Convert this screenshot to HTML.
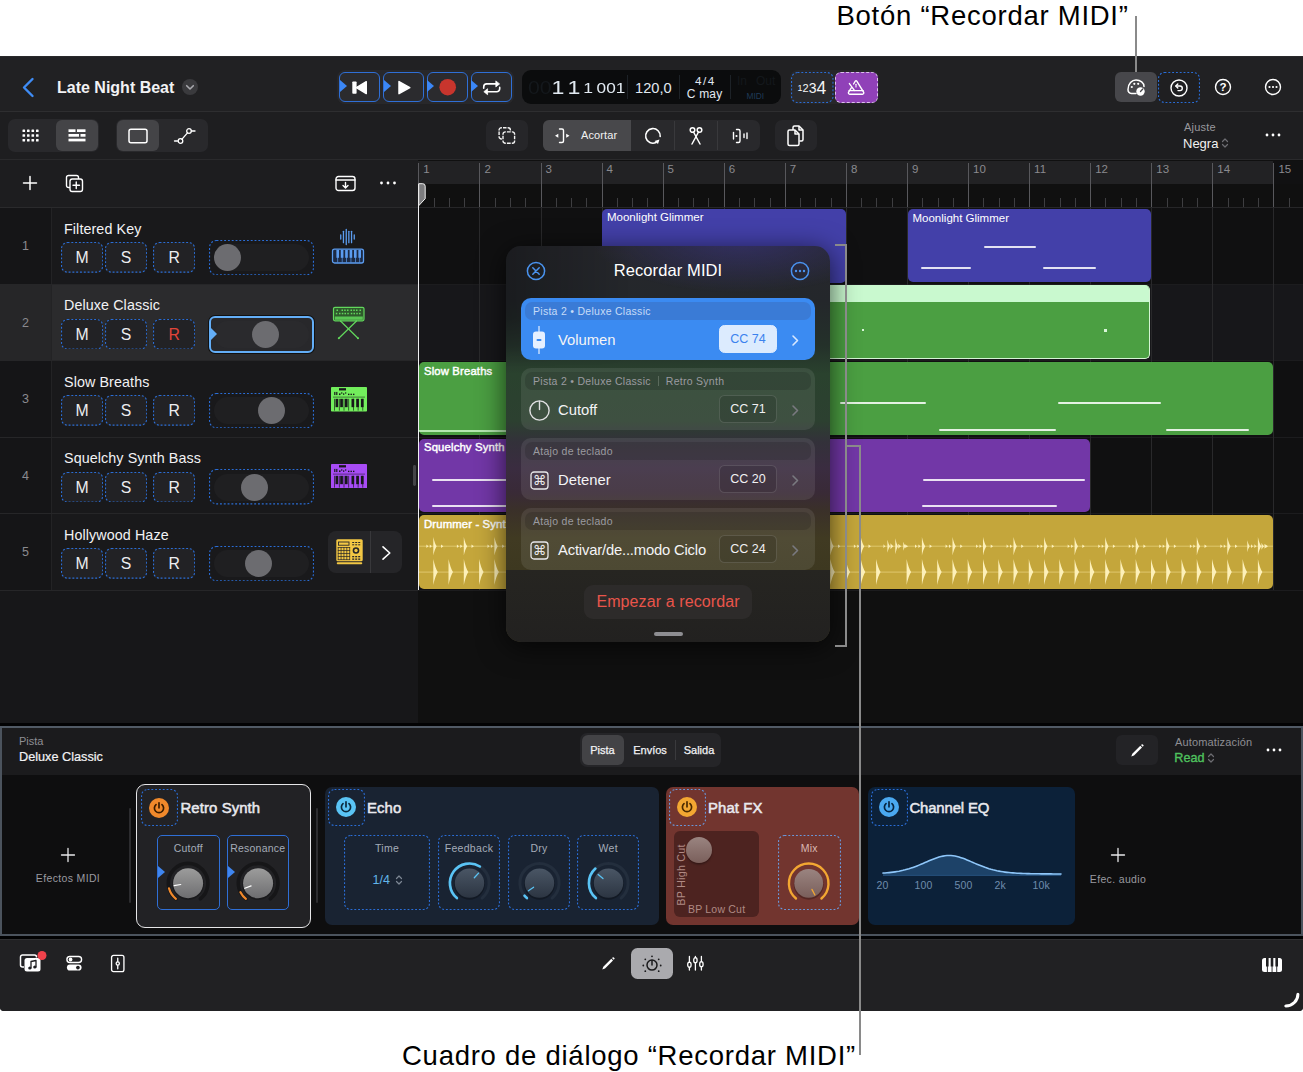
<!DOCTYPE html>
<html lang="es"><head><meta charset="utf-8"><title>Recordar MIDI</title>
<style>
*{box-sizing:border-box;margin:0;padding:0}
html,body{width:1303px;height:1072px;overflow:hidden;background:#fff}
body{font-family:"Liberation Sans",sans-serif;color:#fff;position:relative}
.abs{position:absolute}
#app{position:absolute;left:0;top:56px;width:1303px;height:954.700px;background:#1d1d1f;overflow:hidden;border-radius:0 0 4px 4px}
.callout{position:absolute;color:#000;font-size:27.500px;white-space:nowrap;letter-spacing:0.740px}
.vline{position:absolute;background:#8a8a8a;width:2px}
.hline{position:absolute;background:#8a8a8a;height:2px}
/* top bar */
#topbar{position:absolute;left:0;top:0;width:1303px;height:56px;background:#212123;border-bottom:1px solid #2e2e30;box-shadow:inset 0 1px 0 #29292b}
#toolbar2{position:absolute;left:0;top:56px;width:1303px;height:48px;background:#1e1e20;border-bottom:1px solid #2a2a2c}
#trkhead{position:absolute;left:0;top:104px;width:418px;height:48px;background:#1d1d1f;border-bottom:1px solid #2a2a2c}
#tracks{position:absolute;left:0;top:152px;width:418px;height:517px;background:#171719}
#timeline{position:absolute;left:418px;top:104px;width:885px;height:565px;background:#101010;overflow:hidden}
#panel{position:absolute;left:0;top:669px;width:1303px;height:210.650px;background:#0e0e0f}
#bottombar{position:absolute;left:0;top:882.900px;width:1303px;height:71.800px;background:#212123;border-top:1px solid #303032}

/* transport */
.tbtn{position:absolute;top:15.800px;width:41.400px;height:30.400px;border:1px solid #2f6fd6;border-radius:6px;background:#2b2b2e}
.tbtn:before{content:"";position:absolute;left:-0.500px;top:7.700px;border-left:7.300px solid #3b87f7;border-top:6.800px solid transparent;border-bottom:6.800px solid transparent}
.tbtn svg{position:absolute;left:-1px;top:-1px}
#lcd{position:absolute;left:522px;top:14px;width:259px;height:34px;border-radius:9px;background:#0b0c0d}
#lcd span{position:absolute;white-space:nowrap}
#lcd span.c{width:20px;text-align:center;color:#e1e9f1}
.ldiv{position:absolute;top:5px;width:1px;height:24px;background:#1d2227}
.dotbtn{position:absolute;border:1px solid transparent;border-radius:6px;background:#242427}
.icn{position:absolute}
.seg{position:absolute;background:#29292c;border-radius:7px}
.segsel{position:absolute;background:#444447;border-radius:6px}

.trow{position:absolute;left:0;width:418px;height:76.500px;border-bottom:1px solid #262628;background:#19191b}
.trow.sel{background:#2b2b2d}
.trow .num{position:absolute;left:0;top:0;width:52px;height:100%;border-right:1px solid #232325;color:#8a8a8f;font-size:12.500px;text-align:center;line-height:77px;background:#151517}
.trow.sel .num{background:#262628}
.trow .nm{position:absolute;left:64px;top:12.500px;font-size:14.300px;color:#f2f2f4;white-space:nowrap;letter-spacing:0.1px}
.msr{position:absolute;top:34.100px;height:30.700px;width:42.200px;border-radius:6px;background:#222225;color:#ededf0;font-size:15.800px;text-align:center;line-height:32.200px}
.sld{position:absolute;left:209px;top:31.800px;width:105px;height:35.400px;border-radius:7px}
.sld i{position:absolute;left:4.700px;top:4.600px;right:5.100px;bottom:4.200px;border-radius:14px;background:#1f1f21}
.sld b{position:absolute;top:4.300px;width:27px;height:27px;border-radius:14px;background:#6c6c70}

#ruler{position:absolute;left:0;top:1px;width:885px;height:22.700px;background:#222224}
#ruler span{position:absolute;top:2px;font-size:12px;color:#8e8e93}
.bar{position:absolute;top:3px;width:1px;background:#58585c}
.gl{position:absolute;top:47px;width:1px;height:383px;background:#29292b}
.tk{position:absolute;top:38px;width:1px;height:9px;background:#3e3e41}
.lane{position:absolute;left:0;width:885px}
.rg{position:absolute;border-radius:5px;overflow:hidden}
.rg .t{position:absolute;left:5px;top:2.500px;font-size:11.500px;color:#fff;white-space:nowrap}
.nt{position:absolute;height:2px;background:rgba(255,255,255,0.85);border-radius:1px}

#dlg{position:absolute;left:506px;top:190px;width:324px;height:396px;border-radius:15px;overflow:hidden;box-shadow:0 5px 28px rgba(0,0,0,0.68);
background:linear-gradient(180deg,#26272c 0px,#24272b 55px,#24312a 100px,#2a422e 128px,#2c4030 175px,#33313a 196px,#3a2c40 222px,#392a37 246px,#3a3029 264px,#403a22 292px,#3d3820 324px)}
.it{position:absolute;left:15px;width:294px;height:62px;border-radius:10px;background:rgba(255,255,255,0.085)}
.it .h{position:absolute;left:4px;top:4px;right:4px;height:18px;border-radius:7px;background:rgba(0,0,0,0.14);font-size:10.500px;line-height:18px;padding-left:8px;color:#9b9ba0;white-space:nowrap;letter-spacing:0.280px}
.it .l{position:absolute;left:37px;top:33px;font-size:14.800px;color:#f4f4f6;white-space:nowrap;line-height:18px}
.it .cc{position:absolute;left:198px;top:27.600px;width:58px;height:28.400px;border-radius:5.500px;border:1px solid rgba(255,255,255,0.13);font-size:12.500px;line-height:26.600px;text-align:center;color:#f0f0f2;background:rgba(0,0,0,0.12)}
.it svg.ch{position:absolute;left:269px;top:36px}
.it.sel{background:#3b8bf2}
.it.sel .h{background:#3a7bd6;color:#c6dcf8}
.it.sel .cc{background:#dcebfe;border-color:#dcebfe;color:#3b82ee}
.rg .t b{font-size:11.300px;font-weight:normal;-webkit-text-stroke:0.450px #fff;letter-spacing:0.150px}

#panel{border:2px solid #4b535d;border-top-color:#050506;border-bottom-width:2.450px}
#phead{position:absolute;left:0;top:0;width:1299px;height:47.700px;background:#1b1b1d}
.pcard{position:absolute;border-radius:7px}
.pw{position:absolute;width:37px;height:37px;border:1px solid transparent;border-radius:6px}
.pw svg.ps{position:absolute;left:6.300px;top:6.800px}
.ptitle{position:absolute;top:13.200px;font-size:14.900px;font-weight:normal;-webkit-text-stroke:0.500px #e9e9ee;color:#e9e9ee;white-space:nowrap;letter-spacing:0.100px}
.pbox{position:absolute;top:48px;height:75px;letter-spacing:0.300px;border:1px solid transparent;border-radius:5px;color:#a4acb8;font-size:10.500px;text-align:center;padding-top:6px;white-space:nowrap}
.pbox svg{position:absolute;left:0;top:0}
.pbox svg.db{left:-1px;top:-1px}
.small{font-size:10.500px;color:#9a9aa0;white-space:nowrap;position:absolute}
.db{position:absolute;left:0;top:0;pointer-events:none}
</style></head><body>
<div class="callout" style="left:836.500px;top:0px">Botón “Recordar MIDI”</div>
<div class="callout" style="left:402px;top:1040px">Cuadro de diálogo “Recordar MIDI”</div>
<div id="app">
<div id="topbar">
<svg class="icn" style="left:20px;top:20px" width="16" height="22" viewBox="0 0 16 22"><path d="M12.500 3 L4 11.500 L12.500 20" fill="none" stroke="#3f8cf5" stroke-width="2.4" stroke-linecap="round" stroke-linejoin="round"/></svg>
<div class="abs" style="left:57px;top:22.500px;font-size:16px;font-weight:bold;letter-spacing:0px;color:#f2f2f4;white-space:nowrap">Late Night Beat</div>
<div class="abs" style="left:182px;top:23px;width:16px;height:16px;border-radius:8px;background:#3a3a3d"></div>
<svg class="icn" style="left:182px;top:23px" width="16" height="16" viewBox="0 0 16 16"><path d="M4.7 6.7 L8 10 L11.3 6.7" fill="none" stroke="#a9a9ae" stroke-width="1.6" stroke-linecap="round" stroke-linejoin="round"/></svg>

<div class="abs" style="left:337.400px;top:14.100px;width:176.800px;height:33.900px;border-radius:8px;background:#28282b"></div>
<div class="tbtn" style="left:339px"><svg width="42" height="31" viewBox="0 0 42 31"><rect x="13.300" y="9.400" width="4.300" height="12.400" rx="0.800" fill="#fff"/><path d="M27.300 9.600 L17.400 15.600 L27.300 21.600 Z" fill="#fff" stroke="#fff" stroke-width="1.400" stroke-linejoin="round"/></svg></div>
<div class="tbtn" style="left:383px"><svg width="42" height="31" viewBox="0 0 42 31"><path d="M16 9.600 L26.800 15.600 L16 21.600 Z" fill="#fff" stroke="#fff" stroke-width="1.500" stroke-linejoin="round"/></svg></div>
<div class="tbtn" style="left:426.900px"><svg width="42" height="31" viewBox="0 0 42 31"><circle cx="20.700" cy="15.200" r="8.300" fill="#c8352d"/></svg></div>
<div class="tbtn" style="left:470.700px"><svg width="42" height="31" viewBox="0 0 42 31"><g fill="none" stroke="#fff" stroke-width="1.600" stroke-linecap="round" stroke-linejoin="round"><path d="M12.700 16.200 v-1.300 a3 3 0 0 1 3 -3 h9.500"/><path d="M28.700 15.400 v1.300 a3 3 0 0 1 -3 3 h-9.500"/></g><path d="M24.800 8.900 L28.600 11.900 L24.800 14.900 Z" fill="#fff" stroke="#fff" stroke-width="0.700" stroke-linejoin="round"/><path d="M16.600 16.700 L12.800 19.700 L16.600 22.700 Z" fill="#fff" stroke="#fff" stroke-width="0.700" stroke-linejoin="round"/></svg></div>

<div id="lcd">
<span style="left:6px;top:7px;font-size:18.500px;color:#14181c;transform:scaleX(1.15);transform-origin:0 0">00</span>
<span class="c" style="left:25.600px;top:7px;font-size:18.500px;transform:scaleX(1.25)">1</span>
<span class="c" style="left:41.900px;top:7px;font-size:18.500px;transform:scaleX(1.25)">1</span>
<span class="c" style="left:55.500px;top:10px;font-size:14.600px;transform:scaleX(1.2)">1</span>
<span class="c" style="left:69.200px;width:40px;top:10px;font-size:14.600px;transform:scaleX(1.18)">001</span>
<div class="ldiv" style="left:105px"></div>
<span class="c" style="left:111.300px;width:40px;top:10px;font-size:14.600px">120,0</span>
<div class="ldiv" style="left:157px"></div>
<span class="c" style="left:157.600px;width:50px;top:4px;font-size:11.700px;letter-spacing:1.500px;padding-left:1.500px">4/4</span>
<span class="c" style="left:157.600px;width:50px;top:17px;font-size:12px;letter-spacing:0.200px">C may</span>
<div class="ldiv" style="left:208px"></div>
<span style="left:215px;top:4px;font-size:12px;color:#14181c">In</span>
<span style="left:234px;top:4px;font-size:12px;color:#14181c">Out</span>
<span style="left:224.500px;top:21px;font-size:8.400px;color:#1f3a57">MIDI</span>
</div>

<div class="abs" style="left:789.500px;top:14px;width:89px;height:34px;border-radius:8px;background:#27272a"></div>
<div class="dotbtn" style="left:791px;top:15.500px;width:42.500px;height:31px;background:#2a2a2d"><svg class="db" style="left:-1px;top:-1px" width="42.5" height="31"><rect x="0.550" y="0.550" width="41.40" height="29.90" rx="6" fill="none" stroke="#2a6dd6" stroke-width="1.1" stroke-dasharray="1.9 1.9"/></svg></div>
<div class="abs" style="left:797.500px;top:20px;height:22px;line-height:22px;color:#f4f4f6;white-space:nowrap"><span style="font-size:9px;vertical-align:middle">1</span><span style="font-size:11px;vertical-align:middle">2</span><span style="font-size:14px;vertical-align:middle">3</span><span style="font-size:17.500px;vertical-align:middle">4</span></div>
<div class="abs" style="left:835px;top:15.500px;width:42.500px;height:31px;border-radius:6px;background:#9041b8;border:1px dashed #dcc0ec"></div>
<svg class="icn" style="left:846px;top:22px" width="20" height="20" viewBox="0 0 20 20"><g fill="none" stroke="#fff" stroke-width="1.400" stroke-linejoin="round" stroke-linecap="round"><path d="M7.600 6 L9.300 3.200 a0.900 0.900 0 0 1 1.500 0 L17.600 14.200 a1.300 1.300 0 0 1 -1.100 2 h-12.800 a1.300 1.300 0 0 1 -1.100 -2 L5.300 9.800"/><path d="M3 12.600 h14.200"/><path d="M3.400 5.600 L8.400 12.400"/><path d="M10 6.200 v2.800" stroke-width="1.100"/></g></svg>

<div class="abs" style="left:1114.800px;top:15.800px;width:41.800px;height:30.700px;border-radius:6px;background:#47474b"></div>
<svg class="icn" style="left:1125px;top:20px" width="22" height="22" viewBox="0 0 22 22"><g fill="none" stroke="#fff" stroke-width="1.500" stroke-linecap="round"><path d="M11 17.500 H6.500 A4 4 0 0 1 3 13.500 C3 7.500 7 4 11 4 C15.500 4 19 7 19 10.500"/></g><circle cx="6.800" cy="11" r="1.100" fill="#fff"/><circle cx="9.300" cy="7.800" r="1.100" fill="#fff"/><circle cx="13.200" cy="7.800" r="1.100" fill="#fff"/><circle cx="15.500" cy="15.500" r="4.200" fill="#fff"/><path d="M15.500 15.500 L17.800 13" stroke="#47474b" stroke-width="1.300" stroke-linecap="round"/></svg>
<div class="dotbtn" style="left:1158px;top:15.500px;width:42px;height:31px;background:#1f1f21"><svg class="db" style="left:-1px;top:-1px" width="42" height="31"><rect x="0.550" y="0.550" width="40.90" height="29.90" rx="6" fill="none" stroke="#2a6dd6" stroke-width="1.1" stroke-dasharray="1.9 1.9"/></svg></div>
<svg class="icn" style="left:1169px;top:21.500px" width="20" height="20" viewBox="0 0 20 20"><g fill="none" stroke="#fff" stroke-width="1.400" stroke-linecap="round" stroke-linejoin="round"><circle cx="10" cy="10" r="8"/><path d="M7 8 h4 a2.300 2.300 0 0 1 0 4.600 h-2"/><path d="M8.800 6 L6.800 8 L8.800 10"/></g></svg>
<svg class="icn" style="left:1213px;top:21px" width="20" height="20" viewBox="0 0 20 20"><circle cx="10" cy="10" r="7.500" fill="none" stroke="#fff" stroke-width="1.400"/><text x="10" y="14.200" font-size="11.500" font-family="Liberation Sans, sans-serif" font-weight="bold" fill="#fff" text-anchor="middle">?</text></svg>
<svg class="icn" style="left:1262.800px;top:21.300px" width="20" height="20" viewBox="0 0 20 20"><circle cx="10" cy="10" r="7.500" fill="none" stroke="#fff" stroke-width="1.400"/><circle cx="6.500" cy="10" r="1.100" fill="#fff"/><circle cx="10" cy="10" r="1.100" fill="#fff"/><circle cx="13.500" cy="10" r="1.100" fill="#fff"/></svg>
</div>
<div id="toolbar2">
<div class="seg" style="left:8px;top:7px;width:91px;height:33px"></div>
<div class="segsel" style="left:56px;top:8px;width:42px;height:31px"></div>
<svg class="icn" style="left:22px;top:15px" width="18" height="18" viewBox="0 0 18 18"><g fill="#fff"><rect x="0.500" y="2.500" width="2.600" height="2.600" rx="0.600"/><rect x="5" y="2.500" width="2.600" height="2.600" rx="0.600"/><rect x="9.500" y="2.500" width="2.600" height="2.600" rx="0.600"/><rect x="14" y="2.500" width="2.600" height="2.600" rx="0.600"/><rect x="0.500" y="7.200" width="2.600" height="2.600" rx="0.600"/><rect x="5" y="7.200" width="2.600" height="2.600" rx="0.600"/><rect x="9.500" y="7.200" width="2.600" height="2.600" rx="0.600"/><rect x="14" y="7.200" width="2.600" height="2.600" rx="0.600"/><rect x="0.500" y="11.900" width="2.600" height="2.600" rx="0.600"/><rect x="5" y="11.900" width="2.600" height="2.600" rx="0.600"/><rect x="9.500" y="11.900" width="2.600" height="2.600" rx="0.600"/><rect x="14" y="11.900" width="2.600" height="2.600" rx="0.600"/></g></svg>
<svg class="icn" style="left:68px;top:15px" width="18" height="18" viewBox="0 0 18 18"><g fill="#fff"><rect x="0.500" y="2.300" width="7" height="2.700"/><rect x="9" y="2.300" width="8.500" height="2.700"/><rect x="0.500" y="7" width="10.500" height="2.700"/><rect x="12.500" y="7" width="5" height="2.700"/><rect x="0.500" y="11.700" width="17" height="2.700"/></g></svg>
<div class="seg" style="left:116px;top:7px;width:92px;height:33px"></div>
<div class="segsel" style="left:117px;top:8px;width:42px;height:31px"></div>
<svg class="icn" style="left:128px;top:15px" width="20" height="18" viewBox="0 0 20 18"><rect x="1" y="2.200" width="18" height="13.500" rx="2" fill="none" stroke="#fff" stroke-width="1.500"/></svg>
<svg class="icn" style="left:173px;top:14px" width="24" height="20" viewBox="0 0 24 20"><g fill="none" stroke="#fff" stroke-width="1.300" stroke-linecap="round"><path d="M1.500 15 h3"/><circle cx="7.500" cy="15" r="2.300"/><path d="M9 13.200 L14.500 6.800"/><circle cx="16" cy="5" r="2.300"/><path d="M18.500 5 h3.500"/></g></svg>

<div class="seg" style="left:486px;top:8px;width:42px;height:31px;background:#262629"></div>
<svg class="icn" style="left:497px;top:13px" width="20" height="20" viewBox="0 0 20 20"><g fill="none" stroke="#f4f4f4" stroke-width="1.400" stroke-linecap="butt"><path d="M2.1 5.5 V5.0 A2.3 2.3 0 0 1 4.4 2.7 H4.9 M10.600 2.7 H11.100 A2.3 2.3 0 0 1 13.4 5.0 V5.5 M13.4 11.2 V11.7 A2.3 2.3 0 0 1 11.100 14.0 H10.600 M4.9 14.0 H4.4 A2.3 2.3 0 0 1 2.1 11.7 V11.2 M6.0 2.7 H9.5 M6.0 14.0 H9.5 M2.1 6.6 V10.1 M13.4 6.6 V10.1"/><rect x="5.300" y="6.200" width="13" height="12.700" rx="3" fill="#262629" stroke="none"/><path d="M6 9.7 V9.2 A2.3 2.3 0 0 1 8.3 6.9 H8.8 M14.8 6.9 H15.3 A2.3 2.3 0 0 1 17.6 9.2 V9.7 M17.6 15.400 V15.900 A2.3 2.3 0 0 1 15.3 18.200 H14.8 M8.8 18.200 H8.3 A2.3 2.3 0 0 1 6 15.900 V15.400 M9.9 6.9 H13.700 M9.9 18.200 H13.700 M6 10.8 V14.300 M17.6 10.8 V14.300"/></g></svg>

<div class="seg" style="left:543px;top:8px;width:217px;height:31px;background:#29292c"></div>
<div class="abs" style="left:543px;top:8px;width:88px;height:31px;background:#48484b;border-radius:6px 0 0 6px"></div>
<svg class="icn" style="left:553px;top:14px" width="20" height="20" viewBox="0 0 20 20"><g fill="none" stroke="#fff" stroke-width="1.400" stroke-linecap="round" stroke-linejoin="round"><path d="M6.500 3 h2.500 a1.500 1.500 0 0 1 1.500 1.500 v10.500 a1.500 1.500 0 0 1 -1.500 1.500 h-2.500"/></g><path d="M2 9.700 l3.300 -2 v4 Z" fill="#fff"/><path d="M16.500 9.700 l-3.300 -2 v4 Z" fill="#fff"/></svg>
<div class="abs" style="left:581px;top:17px;font-size:11px;color:#f2f2f2;letter-spacing:0.1px">Acortar</div>
<div class="abs" style="left:674px;top:9px;width:1px;height:29px;background:#39393c"></div>
<div class="abs" style="left:717px;top:9px;width:1px;height:29px;background:#39393c"></div>
<svg class="icn" style="left:643px;top:14px" width="20" height="20" viewBox="0 0 20 20"><g fill="none" stroke="#fff" stroke-width="1.600" stroke-linecap="round"><path d="M13 16.500 A7.300 7.300 0 1 1 17.200 10.500"/></g><path d="M11.500 15 l5 -1.500 l-1.500 4.500 Z" fill="#fff"/></svg>
<svg class="icn" style="left:686px;top:13px" width="20" height="22" viewBox="0 0 20 22"><g fill="none" stroke="#fff" stroke-width="1.500" stroke-linecap="round"><circle cx="6.500" cy="5" r="2.300"/><circle cx="13.500" cy="5" r="2.300"/><path d="M7.500 7 L14 19"/><path d="M12.500 7 L6 19"/></g></svg>
<svg class="icn" style="left:729px;top:14px" width="20" height="20" viewBox="0 0 20 20"><g fill="none" stroke="#fff" stroke-width="1.400" stroke-linecap="round" stroke-linejoin="round"><path d="M7.500 3.500 h2 a1.500 1.500 0 0 1 1.500 1.500 v10 a1.500 1.500 0 0 1 -1.500 1.500 h-2"/><path d="M4.500 6.500 v6.500"/><path d="M15 8 v3.500"/><path d="M18 7 v5.500"/></g><circle cx="7.500" cy="10" r="1.100" fill="#fff"/></svg>

<div class="seg" style="left:775px;top:8px;width:42px;height:31px;background:#262629"></div>
<svg class="icn" style="left:786px;top:12px" width="20" height="24" viewBox="0 0 20 24"><g fill="none" stroke="#fff" stroke-width="1.500" stroke-linejoin="round"><path d="M7 6 V3.500 a1.500 1.500 0 0 1 1.500 -1.500 h4.500 l4 4 v9.500 a1.500 1.500 0 0 1 -1.500 1.500 h-2"/><path d="M13 2 v4 h4"/><path d="M3.500 6 h5.500 l4 4 v10 a1.500 1.500 0 0 1 -1.500 1.500 h-8 a1.500 1.500 0 0 1 -1.500 -1.500 v-12.500 a1.500 1.500 0 0 1 1.500 -1.500 Z"/><path d="M9 6 v4 h4"/></g></svg>

<div class="abs" style="left:1184px;top:9px;font-size:11px;color:#98989d;letter-spacing:0.200px">Ajuste</div>
<div class="abs" style="left:1183px;top:23.500px;font-size:13px;color:#f2f2f2">Negra</div>
<svg class="icn" style="left:1221px;top:25px" width="8" height="12" viewBox="0 0 8 12"><g fill="none" stroke="#6d6d72" stroke-width="1.200" stroke-linecap="round" stroke-linejoin="round"><path d="M1.500 4.500 L4 2 L6.500 4.500"/><path d="M1.500 7.500 L4 10 L6.500 7.500"/></g></svg>
<svg class="icn" style="left:1264px;top:20px" width="18" height="6" viewBox="0 0 18 6"><circle cx="3" cy="3" r="1.400" fill="#fff"/><circle cx="9" cy="3" r="1.400" fill="#fff"/><circle cx="15" cy="3" r="1.400" fill="#fff"/></svg>
</div>
<div id="trkhead">
<svg class="icn" style="left:22px;top:15px" width="16" height="16" viewBox="0 0 16 16"><path d="M8 1.500 v13 M1.500 8 h13" stroke="#fff" stroke-width="1.500" stroke-linecap="round"/></svg>
<svg class="icn" style="left:65px;top:14px" width="19" height="19" viewBox="0 0 19 19"><g fill="none" stroke="#fff" stroke-width="1.400" stroke-linecap="round"><path d="M4.500 13.500 h-1 a2 2 0 0 1 -2 -2 v-8 a2 2 0 0 1 2 -2 h8 a2 2 0 0 1 2 2 v1"/><rect x="5" y="5" width="12.500" height="12.500" rx="2.200" fill="#1d1d1f"/><path d="M11.250 8 v6.500 M8 11.250 h6.500"/></g></svg>
<svg class="icn" style="left:335px;top:15px" width="21" height="17" viewBox="0 0 21 17"><g fill="none" stroke="#fff" stroke-width="1.400" stroke-linecap="round" stroke-linejoin="round"><rect x="1" y="1.500" width="19" height="14" rx="2.500"/><path d="M1 5 h19"/><path d="M10.500 7.500 v5 M8 10.500 l2.500 2.500 l2.500 -2.500"/></g></svg>
<svg class="icn" style="left:379px;top:20px" width="18" height="6" viewBox="0 0 18 6"><circle cx="2.500" cy="3" r="1.400" fill="#fff"/><circle cx="9" cy="3" r="1.400" fill="#fff"/><circle cx="15.500" cy="3" r="1.400" fill="#fff"/></svg>
</div>
<div id="tracks">
<div class="trow" style="top:0.0px"><div class="num">1</div><div class="nm">Filtered Key</div>
<div class="msr" style="left:61px">M<svg class="db" width="42.2" height="30.7"><rect x="0.550" y="0.550" width="41.10" height="29.60" rx="6" fill="none" stroke="#2a6dd6" stroke-width="1.1" stroke-dasharray="1.9 1.9"/></svg></div><div class="msr" style="left:104.900px">S<svg class="db" width="42.2" height="30.7"><rect x="0.550" y="0.550" width="41.10" height="29.60" rx="6" fill="none" stroke="#2a6dd6" stroke-width="1.1" stroke-dasharray="1.9 1.9"/></svg></div><div class="msr" style="left:153px">R<svg class="db" width="42.2" height="30.7"><rect x="0.550" y="0.550" width="41.10" height="29.60" rx="6" fill="none" stroke="#2a6dd6" stroke-width="1.1" stroke-dasharray="1.9 1.9"/></svg></div>
<div class="sld"><svg class="db" width="105" height="35.4"><rect x="0.550" y="0.550" width="103.90" height="34.30" rx="7" fill="none" stroke="#2a6dd6" stroke-width="1.1" stroke-dasharray="1.9 1.9"/></svg><i></i><b style="left:4.7px"></b></div>
<svg class="icn" style="left:331px;top:20px" width="34" height="37" viewBox="0 0 34 37"><rect x="9.1" y="6.3" width="1.300" height="5.4" rx="0.600" fill="#5b9cf0"/><rect x="11.8" y="2.7" width="1.300" height="12.6" rx="0.600" fill="#5b9cf0"/><rect x="14.6" y="0.8" width="1.300" height="16.4" rx="0.600" fill="#5b9cf0"/><rect x="17.2" y="2.7" width="1.300" height="12.6" rx="0.600" fill="#5b9cf0"/><rect x="19.9" y="2.7" width="1.300" height="12.6" rx="0.600" fill="#5b9cf0"/><rect x="22.6" y="6.3" width="1.300" height="5.4" rx="0.600" fill="#5b9cf0"/><rect x="1.500" y="21.200" width="31" height="13.800" rx="2" fill="#1c2a44" stroke="#5b9cf0" stroke-width="1.300"/><rect x="5.4" y="21.800" width="2.600" height="8" fill="#5b9cf0"/><rect x="9.8" y="21.800" width="2.600" height="8" fill="#5b9cf0"/><rect x="14.2" y="21.800" width="2.600" height="8" fill="#5b9cf0"/><rect x="18.6" y="21.800" width="2.600" height="8" fill="#5b9cf0"/><rect x="23" y="21.800" width="2.600" height="8" fill="#5b9cf0"/><rect x="27.4" y="21.800" width="2.600" height="8" fill="#5b9cf0"/><rect x="6.4" y="29" width="0.700" height="5.500" fill="#5b9cf0"/><rect x="10.8" y="29" width="0.700" height="5.500" fill="#5b9cf0"/><rect x="15.200000000000001" y="29" width="0.700" height="5.500" fill="#5b9cf0"/><rect x="19.599999999999998" y="29" width="0.700" height="5.500" fill="#5b9cf0"/><rect x="24.0" y="29" width="0.700" height="5.500" fill="#5b9cf0"/><rect x="28.4" y="29" width="0.700" height="5.500" fill="#5b9cf0"/></svg></div>
<div class="trow sel" style="top:76.5px"><div class="num">2</div><div class="nm">Deluxe Classic</div>
<div class="msr" style="left:61px">M<svg class="db" width="42.2" height="30.7"><rect x="0.550" y="0.550" width="41.10" height="29.60" rx="6" fill="none" stroke="#2a6dd6" stroke-width="1.1" stroke-dasharray="1.9 1.9"/></svg></div><div class="msr" style="left:104.900px">S<svg class="db" width="42.2" height="30.7"><rect x="0.550" y="0.550" width="41.10" height="29.60" rx="6" fill="none" stroke="#2a6dd6" stroke-width="1.1" stroke-dasharray="1.9 1.9"/></svg></div><div class="msr" style="left:153px;color:#e0453a">R<svg class="db" width="42.2" height="30.7"><rect x="0.550" y="0.550" width="41.10" height="29.60" rx="6" fill="none" stroke="#2a6dd6" stroke-width="1.1" stroke-dasharray="1.9 1.9"/></svg></div>
<div class="sld" style="left:208.800px;width:105.700px;height:36.500px;border:2.200px solid #63aef7;border-radius:6px;background:#28282b;box-shadow:0 0 0 1px #111"><i style="left:3px;top:2.500px;right:3px;bottom:2.500px;background:#2a2a2d"></i><div class="abs" style="left:0;top:9.800px;border-left:6.500px solid #63aef7;border-top:6.200px solid transparent;border-bottom:6.200px solid transparent"></div><b style="left:40.9px;top:2.600px"></b></div>
<svg class="icn" style="left:331px;top:20px" width="36" height="36" viewBox="0 0 36 36"><rect x="2.500" y="2.300" width="30.500" height="13.500" rx="1.500" fill="#2f5a2c" stroke="#62d85c" stroke-width="1.200"/><rect x="3.800" y="11.500" width="28" height="3.300" fill="#62d85c" opacity="0.85"/><rect x="5.5" y="4.500" width="1.500" height="1.500" fill="#62d85c"/><rect x="10.5" y="4.500" width="1.500" height="1.500" fill="#62d85c"/><rect x="13.2" y="4.500" width="1.500" height="1.500" fill="#62d85c"/><rect x="16" y="4.500" width="1.500" height="1.500" fill="#62d85c"/><rect x="19.5" y="4.500" width="1.500" height="1.500" fill="#62d85c"/><rect x="22.3" y="4.500" width="1.500" height="1.500" fill="#62d85c"/><rect x="25" y="4.500" width="1.500" height="1.500" fill="#62d85c"/><rect x="28.5" y="4.500" width="1.500" height="1.500" fill="#62d85c"/><rect x="4.8" y="7.800" width="1.500" height="1.500" fill="#62d85c"/><rect x="8" y="7.800" width="1.500" height="1.500" fill="#62d85c"/><rect x="10.8" y="7.800" width="1.500" height="1.500" fill="#62d85c"/><rect x="13.5" y="7.800" width="1.500" height="1.500" fill="#62d85c"/><rect x="16.3" y="7.800" width="1.500" height="1.500" fill="#62d85c"/><rect x="19.8" y="7.800" width="1.500" height="1.500" fill="#62d85c"/><rect x="22.5" y="7.800" width="1.500" height="1.500" fill="#62d85c"/><rect x="25.3" y="7.800" width="1.500" height="1.500" fill="#62d85c"/><rect x="28" y="7.800" width="1.500" height="1.500" fill="#62d85c"/><g stroke="#62d85c" stroke-width="1.200" stroke-linecap="round"><path d="M9.500 16 L27 33.300"/><path d="M25.500 16 L7.800 33.300"/></g><circle cx="7.800" cy="33.300" r="1" fill="#62d85c"/><circle cx="27" cy="33.300" r="1" fill="#62d85c"/></svg></div>
<div class="trow" style="top:153.0px"><div class="num">3</div><div class="nm">Slow Breaths</div>
<div class="msr" style="left:61px">M<svg class="db" width="42.2" height="30.7"><rect x="0.550" y="0.550" width="41.10" height="29.60" rx="6" fill="none" stroke="#2a6dd6" stroke-width="1.1" stroke-dasharray="1.9 1.9"/></svg></div><div class="msr" style="left:104.900px">S<svg class="db" width="42.2" height="30.7"><rect x="0.550" y="0.550" width="41.10" height="29.60" rx="6" fill="none" stroke="#2a6dd6" stroke-width="1.1" stroke-dasharray="1.9 1.9"/></svg></div><div class="msr" style="left:153px">R<svg class="db" width="42.2" height="30.7"><rect x="0.550" y="0.550" width="41.10" height="29.60" rx="6" fill="none" stroke="#2a6dd6" stroke-width="1.1" stroke-dasharray="1.9 1.9"/></svg></div>
<div class="sld"><svg class="db" width="105" height="35.4"><rect x="0.550" y="0.550" width="103.90" height="34.30" rx="7" fill="none" stroke="#2a6dd6" stroke-width="1.1" stroke-dasharray="1.9 1.9"/></svg><i></i><b style="left:49.1px"></b></div>
<svg class="icn" style="left:330.500px;top:26px" width="36" height="24.600" preserveAspectRatio="none" viewBox="0 0 36 25"><rect x="0" y="0" width="36" height="25" rx="0.800" fill="#72ee5c"/><rect x="8" y="1.200" width="7" height="2.300" fill="#17171a"/><rect x="3.2" y="5" width="1.2" height="3.2" fill="#17171a"/><rect x="5.2" y="5" width="1.2" height="3.2" fill="#17171a"/><rect x="8" y="6.5" width="1.5" height="1.7" fill="#17171a"/><rect x="10" y="5.5" width="1.4" height="1.2" fill="#17171a"/><rect x="12" y="6.5" width="1.3" height="1.4" fill="#17171a"/><rect x="14" y="5.5" width="1.3" height="1.2" fill="#17171a"/><rect x="17" y="6.8" width="1.4" height="1.4" fill="#17171a"/><rect x="19.5" y="6.8" width="1.4" height="1.4" fill="#17171a"/><rect x="22" y="6.8" width="1.4" height="1.4" fill="#17171a"/><rect x="2" y="9.800" width="32" height="0.900" fill="#17171a" opacity="0.6"/><rect x="4.5" y="12" width="2.700" height="8.500" fill="#17171a"/><rect x="9.2" y="12" width="2.700" height="8.500" fill="#17171a"/><rect x="13.9" y="12" width="2.700" height="8.500" fill="#17171a"/><rect x="20.5" y="12" width="2.700" height="8.500" fill="#17171a"/><rect x="25.2" y="12" width="2.700" height="8.500" fill="#17171a"/><rect x="29.9" y="12" width="2.700" height="8.500" fill="#17171a"/><rect x="3.2" y="12" width="0.800" height="12" fill="#17171a" opacity="0.85"/><rect x="7.9" y="12" width="0.800" height="12" fill="#17171a" opacity="0.85"/><rect x="12.6" y="12" width="0.800" height="12" fill="#17171a" opacity="0.85"/><rect x="17.3" y="12" width="0.800" height="12" fill="#17171a" opacity="0.85"/><rect x="22" y="12" width="0.800" height="12" fill="#17171a" opacity="0.85"/><rect x="26.7" y="12" width="0.800" height="12" fill="#17171a" opacity="0.85"/><rect x="31.4" y="12" width="0.800" height="12" fill="#17171a" opacity="0.85"/></svg></div>
<div class="trow" style="top:229.5px"><div class="num">4</div><div class="nm">Squelchy Synth Bass</div>
<div class="msr" style="left:61px">M<svg class="db" width="42.2" height="30.7"><rect x="0.550" y="0.550" width="41.10" height="29.60" rx="6" fill="none" stroke="#2a6dd6" stroke-width="1.1" stroke-dasharray="1.9 1.9"/></svg></div><div class="msr" style="left:104.900px">S<svg class="db" width="42.2" height="30.7"><rect x="0.550" y="0.550" width="41.10" height="29.60" rx="6" fill="none" stroke="#2a6dd6" stroke-width="1.1" stroke-dasharray="1.9 1.9"/></svg></div><div class="msr" style="left:153px">R<svg class="db" width="42.2" height="30.7"><rect x="0.550" y="0.550" width="41.10" height="29.60" rx="6" fill="none" stroke="#2a6dd6" stroke-width="1.1" stroke-dasharray="1.9 1.9"/></svg></div>
<div class="sld"><svg class="db" width="105" height="35.4"><rect x="0.550" y="0.550" width="103.90" height="34.30" rx="7" fill="none" stroke="#2a6dd6" stroke-width="1.1" stroke-dasharray="1.9 1.9"/></svg><i></i><b style="left:32.3px"></b></div>
<svg class="icn" style="left:330.500px;top:26px" width="36" height="24.600" preserveAspectRatio="none" viewBox="0 0 36 25"><rect x="0" y="0" width="36" height="25" rx="0.800" fill="#a84cf6"/><rect x="8" y="1.200" width="7" height="2.300" fill="#17171a"/><rect x="3.2" y="5" width="1.2" height="3.2" fill="#17171a"/><rect x="5.2" y="5" width="1.2" height="3.2" fill="#17171a"/><rect x="8" y="6.5" width="1.5" height="1.7" fill="#17171a"/><rect x="10" y="5.5" width="1.4" height="1.2" fill="#17171a"/><rect x="12" y="6.5" width="1.3" height="1.4" fill="#17171a"/><rect x="14" y="5.5" width="1.3" height="1.2" fill="#17171a"/><rect x="17" y="6.8" width="1.4" height="1.4" fill="#17171a"/><rect x="19.5" y="6.8" width="1.4" height="1.4" fill="#17171a"/><rect x="22" y="6.8" width="1.4" height="1.4" fill="#17171a"/><rect x="2" y="9.800" width="32" height="0.900" fill="#17171a" opacity="0.6"/><rect x="4.5" y="12" width="2.700" height="8.500" fill="#17171a"/><rect x="9.2" y="12" width="2.700" height="8.500" fill="#17171a"/><rect x="13.9" y="12" width="2.700" height="8.500" fill="#17171a"/><rect x="20.5" y="12" width="2.700" height="8.500" fill="#17171a"/><rect x="25.2" y="12" width="2.700" height="8.500" fill="#17171a"/><rect x="29.9" y="12" width="2.700" height="8.500" fill="#17171a"/><rect x="3.2" y="12" width="0.800" height="12" fill="#17171a" opacity="0.85"/><rect x="7.9" y="12" width="0.800" height="12" fill="#17171a" opacity="0.85"/><rect x="12.6" y="12" width="0.800" height="12" fill="#17171a" opacity="0.85"/><rect x="17.3" y="12" width="0.800" height="12" fill="#17171a" opacity="0.85"/><rect x="22" y="12" width="0.800" height="12" fill="#17171a" opacity="0.85"/><rect x="26.7" y="12" width="0.800" height="12" fill="#17171a" opacity="0.85"/><rect x="31.4" y="12" width="0.800" height="12" fill="#17171a" opacity="0.85"/></svg></div>
<div class="trow" style="top:306.0px"><div class="num">5</div><div class="nm">Hollywood Haze</div>
<div class="msr" style="left:61px">M<svg class="db" width="42.2" height="30.7"><rect x="0.550" y="0.550" width="41.10" height="29.60" rx="6" fill="none" stroke="#2a6dd6" stroke-width="1.1" stroke-dasharray="1.9 1.9"/></svg></div><div class="msr" style="left:104.900px">S<svg class="db" width="42.2" height="30.7"><rect x="0.550" y="0.550" width="41.10" height="29.60" rx="6" fill="none" stroke="#2a6dd6" stroke-width="1.1" stroke-dasharray="1.9 1.9"/></svg></div><div class="msr" style="left:153px">R<svg class="db" width="42.2" height="30.7"><rect x="0.550" y="0.550" width="41.10" height="29.60" rx="6" fill="none" stroke="#2a6dd6" stroke-width="1.1" stroke-dasharray="1.9 1.9"/></svg></div>
<div class="sld"><svg class="db" width="105" height="35.4"><rect x="0.550" y="0.550" width="103.90" height="34.30" rx="7" fill="none" stroke="#2a6dd6" stroke-width="1.1" stroke-dasharray="1.9 1.9"/></svg><i></i><b style="left:35.7px"></b></div>
<div class="abs" style="left:328px;top:17px;width:74px;height:42px;border-radius:8px;background:#252528"></div><div class="abs" style="left:370px;top:17px;width:1px;height:42px;background:#38383b"></div><svg class="icn" style="left:336px;top:24.500px" width="27" height="26" viewBox="0 0 27 26"><rect x="0.300" y="0.300" width="26.400" height="22" rx="1.500" fill="#f2c744"/><rect x="0.800" y="23.200" width="25.400" height="2" rx="0.800" fill="#f2c744"/><rect x="2.500" y="3" width="10.500" height="3.200" fill="#f2c744" stroke="#252528" stroke-width="0.900"/><rect x="2.2" y="8.5" width="2.300" height="2.500" fill="#252528" opacity="0" /><rect x="5.1" y="8.5" width="2.300" height="2.500" fill="#252528" opacity="0" /><rect x="8.0" y="8.5" width="2.300" height="2.500" fill="#252528" opacity="0" /><rect x="10.9" y="8.5" width="2.300" height="2.500" fill="#252528" opacity="0" /><rect x="2.2" y="11.6" width="2.300" height="2.500" fill="#252528" opacity="0" /><rect x="5.1" y="11.6" width="2.300" height="2.500" fill="#252528" opacity="0" /><rect x="8.0" y="11.6" width="2.300" height="2.500" fill="#252528" opacity="0" /><rect x="10.9" y="11.6" width="2.300" height="2.500" fill="#252528" opacity="0" /><rect x="2.2" y="14.7" width="2.300" height="2.500" fill="#252528" opacity="0" /><rect x="5.1" y="14.7" width="2.300" height="2.500" fill="#252528" opacity="0" /><rect x="8.0" y="14.7" width="2.300" height="2.500" fill="#252528" opacity="0" /><rect x="10.9" y="14.7" width="2.300" height="2.500" fill="#252528" opacity="0" /><rect x="2.2" y="17.8" width="2.300" height="2.500" fill="#252528" opacity="0" /><rect x="5.1" y="17.8" width="2.300" height="2.500" fill="#252528" opacity="0" /><rect x="8.0" y="17.8" width="2.300" height="2.500" fill="#252528" opacity="0" /><rect x="10.9" y="17.8" width="2.300" height="2.500" fill="#252528" opacity="0" /><rect x="1.8" y="8" width="0.700" height="13" fill="#252528"/><rect x="4.7" y="8" width="0.700" height="13" fill="#252528"/><rect x="7.6" y="8" width="0.700" height="13" fill="#252528"/><rect x="10.5" y="8" width="0.700" height="13" fill="#252528"/><rect x="13.4" y="8" width="0.700" height="13" fill="#252528"/><rect x="1.800" y="8.0" width="12.300" height="0.700" fill="#252528"/><rect x="1.800" y="11.1" width="12.300" height="0.700" fill="#252528"/><rect x="1.800" y="14.2" width="12.300" height="0.700" fill="#252528"/><rect x="1.800" y="17.3" width="12.300" height="0.700" fill="#252528"/><rect x="1.800" y="20.4" width="12.300" height="0.700" fill="#252528"/><circle cx="20" cy="11.500" r="3.300" fill="#252528"/><circle cx="20" cy="11.500" r="1.700" fill="#f2c744"/><rect x="16.2" y="3" width="2" height="1" fill="#252528"/><rect x="16.2" y="5.300" width="2" height="1" fill="#252528"/><rect x="16.2" y="17" width="2" height="1.300" fill="#252528"/><rect x="16.2" y="19.500" width="2" height="1.300" fill="#252528"/><rect x="19.2" y="3" width="2" height="1" fill="#252528"/><rect x="19.2" y="5.300" width="2" height="1" fill="#252528"/><rect x="19.2" y="17" width="2" height="1.300" fill="#252528"/><rect x="19.2" y="19.500" width="2" height="1.300" fill="#252528"/><rect x="22.2" y="3" width="2" height="1" fill="#252528"/><rect x="22.2" y="5.300" width="2" height="1" fill="#252528"/><rect x="22.2" y="17" width="2" height="1.300" fill="#252528"/><rect x="22.2" y="19.500" width="2" height="1.300" fill="#252528"/></svg><svg class="icn" style="left:381px;top:30.500px" width="11" height="16" viewBox="0 0 11 16"><path d="M2 1.800 L8.800 8 L2 14.200" fill="none" stroke="#fff" stroke-width="1.600" stroke-linecap="round" stroke-linejoin="round"/></svg></div>
<div class="abs" style="left:413.100px;top:256.800px;width:2.800px;height:21.200px;border-radius:1.400px;background:#444447;z-index:3"></div></div>
<div id="timeline">
<div id="ruler"></div>
<div class="abs" style="left:0;top:47px;width:885px;height:1px;background:#262628"></div>
<div class="abs" style="left:855.4px;top:1px;width:40px;height:22.700px;background:#111112"></div>
<div class="lane" style="top:48px;height:76.500px;background:#101011;border-bottom:1px solid #1c1c1e"></div>
<div class="lane" style="top:124.5px;height:76.500px;background:#17171a;border-bottom:1px solid #1c1c1e"></div>
<div class="lane" style="top:201px;height:76.500px;background:#101011;border-bottom:1px solid #1c1c1e"></div>
<div class="lane" style="top:277.5px;height:76.500px;background:#101011;border-bottom:1px solid #1c1c1e"></div>
<div class="lane" style="top:354px;height:76.500px;background:#101011;border-bottom:1px solid #1c1c1e"></div>
<div class="bar" style="left:0.3px;height:44px"></div><div class="gl" style="left:0.3px"></div><span class="abs" style="left:5.3px;top:3px;font-size:11.500px;color:#8a8a8f">1</span>
<div class="tk" style="left:15.6px"></div><div class="tk" style="left:30.8px"></div><div class="tk" style="left:46.1px"></div><div class="bar" style="left:61.4px;height:44px"></div><div class="gl" style="left:61.4px"></div><span class="abs" style="left:66.4px;top:3px;font-size:11.500px;color:#8a8a8f">2</span>
<div class="tk" style="left:76.6px"></div><div class="tk" style="left:91.9px"></div><div class="tk" style="left:107.2px"></div><div class="bar" style="left:122.5px;height:44px"></div><div class="gl" style="left:122.5px"></div><span class="abs" style="left:127.5px;top:3px;font-size:11.500px;color:#8a8a8f">3</span>
<div class="tk" style="left:137.7px"></div><div class="tk" style="left:153.0px"></div><div class="tk" style="left:168.3px"></div><div class="bar" style="left:183.5px;height:44px"></div><div class="gl" style="left:183.5px"></div><span class="abs" style="left:188.5px;top:3px;font-size:11.500px;color:#8a8a8f">4</span>
<div class="tk" style="left:198.8px"></div><div class="tk" style="left:214.1px"></div><div class="tk" style="left:229.4px"></div><div class="bar" style="left:244.6px;height:44px"></div><div class="gl" style="left:244.6px"></div><span class="abs" style="left:249.6px;top:3px;font-size:11.500px;color:#8a8a8f">5</span>
<div class="tk" style="left:259.9px"></div><div class="tk" style="left:275.2px"></div><div class="tk" style="left:290.4px"></div><div class="bar" style="left:305.7px;height:44px"></div><div class="gl" style="left:305.7px"></div><span class="abs" style="left:310.7px;top:3px;font-size:11.500px;color:#8a8a8f">6</span>
<div class="tk" style="left:321.0px"></div><div class="tk" style="left:336.2px"></div><div class="tk" style="left:351.5px"></div><div class="bar" style="left:366.8px;height:44px"></div><div class="gl" style="left:366.8px"></div><span class="abs" style="left:371.8px;top:3px;font-size:11.500px;color:#8a8a8f">7</span>
<div class="tk" style="left:382.1px"></div><div class="tk" style="left:397.3px"></div><div class="tk" style="left:412.6px"></div><div class="bar" style="left:427.9px;height:44px"></div><div class="gl" style="left:427.9px"></div><span class="abs" style="left:432.9px;top:3px;font-size:11.500px;color:#8a8a8f">8</span>
<div class="tk" style="left:443.1px"></div><div class="tk" style="left:458.4px"></div><div class="tk" style="left:473.7px"></div><div class="bar" style="left:488.9px;height:44px"></div><div class="gl" style="left:488.9px"></div><span class="abs" style="left:493.9px;top:3px;font-size:11.500px;color:#8a8a8f">9</span>
<div class="tk" style="left:504.2px"></div><div class="tk" style="left:519.5px"></div><div class="tk" style="left:534.8px"></div><div class="bar" style="left:550.0px;height:44px"></div><div class="gl" style="left:550.0px"></div><span class="abs" style="left:555.0px;top:3px;font-size:11.500px;color:#8a8a8f">10</span>
<div class="tk" style="left:565.3px"></div><div class="tk" style="left:580.6px"></div><div class="tk" style="left:595.8px"></div><div class="bar" style="left:611.1px;height:44px"></div><div class="gl" style="left:611.1px"></div><span class="abs" style="left:616.1px;top:3px;font-size:11.500px;color:#8a8a8f">11</span>
<div class="tk" style="left:626.4px"></div><div class="tk" style="left:641.6px"></div><div class="tk" style="left:656.9px"></div><div class="bar" style="left:672.2px;height:44px"></div><div class="gl" style="left:672.2px"></div><span class="abs" style="left:677.2px;top:3px;font-size:11.500px;color:#8a8a8f">12</span>
<div class="tk" style="left:687.4px"></div><div class="tk" style="left:702.7px"></div><div class="tk" style="left:718.0px"></div><div class="bar" style="left:733.3px;height:44px"></div><div class="gl" style="left:733.3px"></div><span class="abs" style="left:738.3px;top:3px;font-size:11.500px;color:#8a8a8f">13</span>
<div class="tk" style="left:748.5px"></div><div class="tk" style="left:763.8px"></div><div class="tk" style="left:779.1px"></div><div class="bar" style="left:794.3px;height:44px"></div><div class="gl" style="left:794.3px"></div><span class="abs" style="left:799.3px;top:3px;font-size:11.500px;color:#8a8a8f">14</span>
<div class="tk" style="left:809.6px"></div><div class="tk" style="left:824.9px"></div><div class="tk" style="left:840.1px"></div><div class="bar" style="left:855.4px;height:44px"></div><div class="gl" style="left:855.4px"></div><span class="abs" style="left:860.4px;top:3px;font-size:11.500px;color:#8a8a8f">15</span>
<div class="tk" style="left:870.7px"></div><div class="tk" style="left:886.0px"></div><div class="tk" style="left:901.2px"></div>
<div class="rg" style="left:184.0px;top:48.5px;width:243.5px;height:74.0px;background:#4340a9;"><div class="t">Moonlight Glimmer</div></div>
<div class="rg" style="left:489.5px;top:49.0px;width:243.5px;height:73.0px;background:#4340a9;"><div class="t">Moonlight Glimmer</div><div class="nt" style="left:76.5px;top:37.2px;width:52.0px"></div><div class="nt" style="left:13.5px;top:57.7px;width:49.5px"></div><div class="nt" style="left:135.5px;top:57.7px;width:53.0px"></div></div>
<div class="rg" style="left:177.0px;top:125.0px;width:555.300px;height:73.500px;background:#4b9f42;border:1px solid #d5f5d5;border-top:none"><div class="t"></div><div class="abs" style="left:0;top:0;width:100%;height:17px;background:#c9f9cf"></div><div class="abs" style="left:266px;top:44px;width:2px;height:2px;background:#d9f7d9"></div><div class="abs" style="left:508px;top:44px;width:3px;height:2.500px;background:#d9f7d9"></div></div>
<div class="rg" style="left:1.0px;top:202.0px;width:854.0px;height:73px;background:#4b9f42;"><div class="t"><b>Slow Breaths</b></div><div class="nt" style="left:421.0px;top:40.2px;width:86.0px"></div><div class="nt" style="left:520.0px;top:67.2px;width:117.0px"></div><div class="nt" style="left:639.0px;top:40.2px;width:103.0px"></div><div class="nt" style="left:747.0px;top:67.2px;width:83.0px"></div><div class="abs" style="left:0;bottom:3.500px;width:120px;height:2px;background:#b5e8b0"></div></div>
<div class="rg" style="left:1.0px;top:278.5px;width:671.0px;height:73.5px;background:#7237a7;"><div class="t"><b>Squelchy Synth</b></div><div class="nt" style="left:13.0px;top:40.2px;width:88.0px"></div><div class="nt" style="left:13.0px;top:66.7px;width:88.0px"></div><div class="nt" style="left:504.0px;top:40.2px;width:162.0px"></div><div class="nt" style="left:503.0px;top:66.7px;width:135.0px"></div></div>
<div class="rg" style="left:1.0px;top:355.0px;width:854.0px;height:73.5px;background:#c4a63b;"><div class="t"><b>Drummer - Synt</b></div><svg class="icn" id="drumwave" style="left:0;top:0" width="854" height="73.5" viewBox="0 0 854 73.5"><path d="M0 31.200000000000045 H854 M0 57.10000000000002 H854" stroke="#e6cf78" stroke-width="0.800" fill="none"/><path d="M14.3 44.1 Q16.2 53.2 18.8 57.1 Q16.2 61.0 14.3 70.1 ZM14.3 21.9 Q15.7 28.4 17.7 31.2 Q15.7 34.0 14.3 40.5 ZM7.4 29.4 L9.4 31.2 L7.4 33.0 ZM10.8 29.4 L12.8 31.2 L10.8 33.0 ZM22.0 29.4 L24.4 31.2 L22.0 33.0 ZM29.5 44.1 Q31.4 53.2 34.0 57.1 Q31.4 61.0 29.5 70.1 ZM44.8 44.1 Q46.7 53.2 49.3 57.1 Q46.7 61.0 44.8 70.1 ZM44.8 21.9 Q46.2 28.4 48.2 31.2 Q46.2 34.0 44.8 40.5 ZM37.9 29.4 L39.9 31.2 L37.9 33.0 ZM41.3 29.4 L43.3 31.2 L41.3 33.0 ZM52.5 29.4 L54.9 31.2 L52.5 33.0 ZM60.1 44.1 Q62.0 53.2 64.6 57.1 Q62.0 61.0 60.1 70.1 ZM75.4 44.1 Q77.2 53.2 79.9 57.1 Q77.2 61.0 75.4 70.1 ZM75.4 21.9 Q76.8 28.4 78.8 31.2 Q76.8 34.0 75.4 40.5 ZM68.5 29.4 L70.5 31.2 L68.5 33.0 ZM71.9 29.4 L73.9 31.2 L71.9 33.0 ZM83.1 29.4 L85.5 31.2 L83.1 33.0 ZM90.6 44.1 Q92.5 53.2 95.1 57.1 Q92.5 61.0 90.6 70.1 ZM105.9 44.1 Q107.8 53.2 110.4 57.1 Q107.8 61.0 105.9 70.1 ZM105.9 21.9 Q107.3 28.4 109.3 31.2 Q107.3 34.0 105.9 40.5 ZM99.0 29.4 L101.0 31.2 L99.0 33.0 ZM102.4 29.4 L104.4 31.2 L102.4 33.0 ZM113.6 29.4 L116.0 31.2 L113.6 33.0 ZM121.2 44.1 Q123.1 53.2 125.7 57.1 Q123.1 61.0 121.2 70.1 ZM136.4 44.1 Q138.3 53.2 140.9 57.1 Q138.3 61.0 136.4 70.1 ZM136.4 21.9 Q137.9 28.4 139.8 31.2 Q137.9 34.0 136.4 40.5 ZM129.5 29.4 L131.5 31.2 L129.5 33.0 ZM132.9 29.4 L134.9 31.2 L132.9 33.0 ZM144.1 29.4 L146.5 31.2 L144.1 33.0 ZM151.7 44.1 Q153.6 53.2 156.2 57.1 Q153.6 61.0 151.7 70.1 ZM167.0 44.1 Q168.9 53.2 171.5 57.1 Q168.9 61.0 167.0 70.1 ZM167.0 21.9 Q168.4 28.4 170.4 31.2 Q168.4 34.0 167.0 40.5 ZM160.1 29.4 L162.1 31.2 L160.1 33.0 ZM163.5 29.4 L165.5 31.2 L163.5 33.0 ZM174.7 29.4 L177.1 31.2 L174.7 33.0 ZM182.2 44.1 Q184.1 53.2 186.7 57.1 Q184.1 61.0 182.2 70.1 ZM197.5 44.1 Q199.4 53.2 202.0 57.1 Q199.4 61.0 197.5 70.1 ZM197.5 21.9 Q198.9 28.4 200.9 31.2 Q198.9 34.0 197.5 40.5 ZM190.6 29.4 L192.6 31.2 L190.6 33.0 ZM194.0 29.4 L196.0 31.2 L194.0 33.0 ZM205.2 29.4 L207.6 31.2 L205.2 33.0 ZM212.8 44.1 Q214.7 53.2 217.3 57.1 Q214.7 61.0 212.8 70.1 ZM228.0 44.1 Q229.9 53.2 232.5 57.1 Q229.9 61.0 228.0 70.1 ZM228.0 21.9 Q229.5 28.4 231.4 31.2 Q229.5 34.0 228.0 40.5 ZM221.1 29.4 L223.1 31.2 L221.1 33.0 ZM224.5 29.4 L226.5 31.2 L224.5 33.0 ZM235.7 29.4 L238.1 31.2 L235.7 33.0 ZM243.3 44.1 Q245.2 53.2 247.8 57.1 Q245.2 61.0 243.3 70.1 ZM258.6 44.1 Q260.5 53.2 263.1 57.1 Q260.5 61.0 258.6 70.1 ZM258.6 21.9 Q260.0 28.4 262.0 31.2 Q260.0 34.0 258.6 40.5 ZM251.7 29.4 L253.7 31.2 L251.7 33.0 ZM255.1 29.4 L257.1 31.2 L255.1 33.0 ZM266.3 29.4 L268.7 31.2 L266.3 33.0 ZM273.9 44.1 Q275.8 53.2 278.4 57.1 Q275.8 61.0 273.9 70.1 ZM289.1 44.1 Q291.0 53.2 293.6 57.1 Q291.0 61.0 289.1 70.1 ZM289.1 21.9 Q290.6 28.4 292.5 31.2 Q290.6 34.0 289.1 40.5 ZM282.2 29.4 L284.2 31.2 L282.2 33.0 ZM285.6 29.4 L287.6 31.2 L285.6 33.0 ZM296.8 29.4 L299.2 31.2 L296.8 33.0 ZM304.4 44.1 Q306.3 53.2 308.9 57.1 Q306.3 61.0 304.4 70.1 ZM319.7 44.1 Q321.6 53.2 324.2 57.1 Q321.6 61.0 319.7 70.1 ZM319.7 21.9 Q321.1 28.4 323.1 31.2 Q321.1 34.0 319.7 40.5 ZM312.8 29.4 L314.8 31.2 L312.8 33.0 ZM316.2 29.4 L318.2 31.2 L316.2 33.0 ZM327.4 29.4 L329.8 31.2 L327.4 33.0 ZM334.9 44.1 Q336.8 53.2 339.4 57.1 Q336.8 61.0 334.9 70.1 ZM350.2 44.1 Q352.1 53.2 354.7 57.1 Q352.1 61.0 350.2 70.1 ZM350.2 21.9 Q351.6 28.4 353.6 31.2 Q351.6 34.0 350.2 40.5 ZM343.3 29.4 L345.3 31.2 L343.3 33.0 ZM346.7 29.4 L348.7 31.2 L346.7 33.0 ZM357.9 29.4 L360.3 31.2 L357.9 33.0 ZM365.5 44.1 Q367.4 53.2 370.0 57.1 Q367.4 61.0 365.5 70.1 ZM380.8 44.1 Q382.6 53.2 385.2 57.1 Q382.6 61.0 380.8 70.1 ZM380.8 21.9 Q382.2 28.4 384.1 31.2 Q382.2 34.0 380.8 40.5 ZM373.9 29.4 L375.9 31.2 L373.9 33.0 ZM377.2 29.4 L379.2 31.2 L377.2 33.0 ZM388.4 29.4 L390.8 31.2 L388.4 33.0 ZM396.0 44.1 Q397.9 53.2 400.5 57.1 Q397.9 61.0 396.0 70.1 ZM411.3 44.1 Q413.2 53.2 415.8 57.1 Q413.2 61.0 411.3 70.1 ZM411.3 21.9 Q412.7 28.4 414.7 31.2 Q412.7 34.0 411.3 40.5 ZM404.4 29.4 L406.4 31.2 L404.4 33.0 ZM407.8 29.4 L409.8 31.2 L407.8 33.0 ZM419.0 29.4 L421.4 31.2 L419.0 33.0 ZM426.6 44.1 Q428.4 53.2 431.1 57.1 Q428.4 61.0 426.6 70.1 ZM441.8 44.1 Q443.7 53.2 446.3 57.1 Q443.7 61.0 441.8 70.1 ZM441.8 21.9 Q443.3 28.4 445.2 31.2 Q443.3 34.0 441.8 40.5 ZM434.9 29.4 L436.9 31.2 L434.9 33.0 ZM438.3 29.4 L440.3 31.2 L438.3 33.0 ZM449.5 29.4 L451.9 31.2 L449.5 33.0 ZM457.1 44.1 Q459.0 53.2 461.6 57.1 Q459.0 61.0 457.1 70.1 ZM487.6 44.1 Q489.5 53.2 492.1 57.1 Q489.5 61.0 487.6 70.1 ZM502.9 44.1 Q504.8 53.2 507.4 57.1 Q504.8 61.0 502.9 70.1 ZM502.9 21.9 Q504.3 28.4 506.3 31.2 Q504.3 34.0 502.9 40.5 ZM496.0 29.4 L498.0 31.2 L496.0 33.0 ZM499.4 29.4 L501.4 31.2 L499.4 33.0 ZM510.6 29.4 L513.0 31.2 L510.6 33.0 ZM518.2 44.1 Q520.1 53.2 522.7 57.1 Q520.1 61.0 518.2 70.1 ZM533.5 44.1 Q535.3 53.2 538.0 57.1 Q535.3 61.0 533.5 70.1 ZM533.5 21.9 Q534.9 28.4 536.9 31.2 Q534.9 34.0 533.5 40.5 ZM526.6 29.4 L528.6 31.2 L526.6 33.0 ZM530.0 29.4 L532.0 31.2 L530.0 33.0 ZM541.2 29.4 L543.6 31.2 L541.2 33.0 ZM548.7 44.1 Q550.6 53.2 553.2 57.1 Q550.6 61.0 548.7 70.1 ZM564.0 44.1 Q565.9 53.2 568.5 57.1 Q565.9 61.0 564.0 70.1 ZM564.0 21.9 Q565.4 28.4 567.4 31.2 Q565.4 34.0 564.0 40.5 ZM557.1 29.4 L559.1 31.2 L557.1 33.0 ZM560.5 29.4 L562.5 31.2 L560.5 33.0 ZM571.7 29.4 L574.1 31.2 L571.7 33.0 ZM579.3 44.1 Q581.1 53.2 583.8 57.1 Q581.1 61.0 579.3 70.1 ZM594.5 44.1 Q596.4 53.2 599.0 57.1 Q596.4 61.0 594.5 70.1 ZM594.5 21.9 Q596.0 28.4 597.9 31.2 Q596.0 34.0 594.5 40.5 ZM587.6 29.4 L589.6 31.2 L587.6 33.0 ZM591.0 29.4 L593.0 31.2 L591.0 33.0 ZM602.2 29.4 L604.6 31.2 L602.2 33.0 ZM609.8 44.1 Q611.7 53.2 614.3 57.1 Q611.7 61.0 609.8 70.1 ZM625.1 44.1 Q627.0 53.2 629.6 57.1 Q627.0 61.0 625.1 70.1 ZM625.1 21.9 Q626.5 28.4 628.5 31.2 Q626.5 34.0 625.1 40.5 ZM618.2 29.4 L620.2 31.2 L618.2 33.0 ZM621.6 29.4 L623.6 31.2 L621.6 33.0 ZM632.8 29.4 L635.2 31.2 L632.8 33.0 ZM640.3 44.1 Q642.2 53.2 644.8 57.1 Q642.2 61.0 640.3 70.1 ZM655.6 44.1 Q657.5 53.2 660.1 57.1 Q657.5 61.0 655.6 70.1 ZM655.6 21.9 Q657.0 28.4 659.0 31.2 Q657.0 34.0 655.6 40.5 ZM648.7 29.4 L650.7 31.2 L648.7 33.0 ZM652.1 29.4 L654.1 31.2 L652.1 33.0 ZM663.3 29.4 L665.7 31.2 L663.3 33.0 ZM670.9 44.1 Q672.8 53.2 675.4 57.1 Q672.8 61.0 670.9 70.1 ZM686.2 44.1 Q688.0 53.2 690.7 57.1 Q688.0 61.0 686.2 70.1 ZM686.2 21.9 Q687.6 28.4 689.6 31.2 Q687.6 34.0 686.2 40.5 ZM679.3 29.4 L681.3 31.2 L679.3 33.0 ZM682.7 29.4 L684.7 31.2 L682.7 33.0 ZM693.9 29.4 L696.3 31.2 L693.9 33.0 ZM701.4 44.1 Q703.3 53.2 705.9 57.1 Q703.3 61.0 701.4 70.1 ZM716.7 44.1 Q718.6 53.2 721.2 57.1 Q718.6 61.0 716.7 70.1 ZM716.7 21.9 Q718.1 28.4 720.1 31.2 Q718.1 34.0 716.7 40.5 ZM709.8 29.4 L711.8 31.2 L709.8 33.0 ZM713.2 29.4 L715.2 31.2 L713.2 33.0 ZM724.4 29.4 L726.8 31.2 L724.4 33.0 ZM732.0 44.1 Q733.9 53.2 736.5 57.1 Q733.9 61.0 732.0 70.1 ZM747.2 44.1 Q749.1 53.2 751.7 57.1 Q749.1 61.0 747.2 70.1 ZM747.2 21.9 Q748.7 28.4 750.6 31.2 Q748.7 34.0 747.2 40.5 ZM740.3 29.4 L742.3 31.2 L740.3 33.0 ZM743.7 29.4 L745.7 31.2 L743.7 33.0 ZM754.9 29.4 L757.3 31.2 L754.9 33.0 ZM762.5 44.1 Q764.4 53.2 767.0 57.1 Q764.4 61.0 762.5 70.1 ZM777.8 44.1 Q779.7 53.2 782.3 57.1 Q779.7 61.0 777.8 70.1 ZM777.8 21.9 Q779.2 28.4 781.2 31.2 Q779.2 34.0 777.8 40.5 ZM770.9 29.4 L772.9 31.2 L770.9 33.0 ZM774.3 29.4 L776.3 31.2 L774.3 33.0 ZM785.5 29.4 L787.9 31.2 L785.5 33.0 ZM793.0 44.1 Q794.9 53.2 797.5 57.1 Q794.9 61.0 793.0 70.1 ZM808.3 44.1 Q810.2 53.2 812.8 57.1 Q810.2 61.0 808.3 70.1 ZM808.3 21.9 Q809.7 28.4 811.7 31.2 Q809.7 34.0 808.3 40.5 ZM801.4 29.4 L803.4 31.2 L801.4 33.0 ZM804.8 29.4 L806.8 31.2 L804.8 33.0 ZM816.0 29.4 L818.4 31.2 L816.0 33.0 ZM823.6 44.1 Q825.5 53.2 828.1 57.1 Q825.5 61.0 823.6 70.1 ZM838.9 44.1 Q840.7 53.2 843.4 57.1 Q840.7 61.0 838.9 70.1 ZM838.9 21.9 Q840.3 28.4 842.3 31.2 Q840.3 34.0 838.9 40.5 ZM832.0 29.4 L834.0 31.2 L832.0 33.0 ZM835.4 29.4 L837.4 31.2 L835.4 33.0 ZM846.6 29.4 L849.0 31.2 L846.6 33.0 ZM468.4 24.7 Q469.5 29.3 471.0 31.2 Q469.5 33.2 468.4 37.7 ZM471.5 28.2 Q472.8 30.3 474.5 31.2 Q472.8 32.1 471.5 34.2 ZM476.3 23.2 Q477.4 28.8 478.9 31.2 Q477.4 33.6 476.3 39.2 ZM479.3 28.7 Q480.6 30.5 482.3 31.2 Q480.6 32.0 479.3 33.7 ZM484.3 26.7 Q485.3 29.9 486.7 31.2 Q485.3 32.6 484.3 35.7 ZM486.3 29.2 Q487.6 30.6 489.3 31.2 Q487.6 31.8 486.3 33.2 ZM464.5 29.2 Q465.3 30.6 466.5 31.2 Q465.3 31.8 464.5 33.2 ZM828.3 25.2 Q829.3 29.4 830.7 31.2 Q829.3 33.0 828.3 37.2 ZM832.0 29.2 Q832.8 30.6 834.0 31.2 Q832.8 31.8 832.0 33.2 ZM835.5 29.2 Q836.3 30.6 837.5 31.2 Q836.3 31.8 835.5 33.2 ZM839.3 25.7 Q840.4 29.6 841.9 31.2 Q840.4 32.9 839.3 36.7 ZM842.5 27.7 Q843.6 30.2 845.1 31.2 Q843.6 32.3 842.5 34.7 ZM845.5 28.7 Q846.8 30.5 848.5 31.2 Q846.8 32.0 845.5 33.7 Z" fill="#fdf0b8"/></svg></div>
<div class="abs" style="left:0;top:24px;width:1.300px;height:406px;background:#f0f0f2"></div><svg class="icn" style="left:0;top:23px" width="9" height="25" viewBox="0 0 9 25"><path d="M0.700 0.700 h4 a2.500 2.500 0 0 1 2.500 2.500 v12.500 l-6.500 7 Z" fill="#7b7b7d" stroke="#f0f0f0" stroke-width="1"/></svg>
</div>
<div id="panel">
<svg width="0" height="0" style="position:absolute"><defs><linearGradient id="kgrad" x1="0" y1="0" x2="0" y2="1"><stop offset="0" stop-color="#9c9c9c"/><stop offset="1" stop-color="#6e6e70"/></linearGradient><linearGradient id="egrad" x1="0" y1="0" x2="0" y2="1"><stop offset="0" stop-color="#4a5665"/><stop offset="1" stop-color="#2c3542"/></linearGradient><linearGradient id="pgrad" x1="0" y1="0" x2="0" y2="1"><stop offset="0" stop-color="#9a8480"/><stop offset="1" stop-color="#7a5f5b"/></linearGradient></defs></svg>
<div id="phead"><div class="abs" style="left:-2px;top:-1.200px;width:1303px;height:2.600px;background:#515a65"></div><div class="small" style="left:17px;top:8px;font-size:11px;color:#8e8e93">Pista</div><div class="abs" style="left:17px;top:23px;font-size:12.700px;color:#f2f2f4;-webkit-text-stroke:0.200px #f2f2f4;white-space:nowrap">Deluxe Classic</div><div class="seg" style="left:577.700px;top:6px;width:141.500px;height:34px;background:#252528"></div><div class="segsel" style="left:579.500px;top:7.700px;width:42px;height:30.500px;background:#434346"></div><div class="abs" style="left:579px;top:17px;width:43px;text-align:center;font-size:11px;color:#f2f2f4;-webkit-text-stroke:0.250px #f2f2f4">Pista</div><div class="abs" style="left:625px;top:17px;width:46px;text-align:center;font-size:11px;color:#f2f2f4;-webkit-text-stroke:0.250px #f2f2f4">Envíos</div><div class="abs" style="left:673px;top:13px;width:1px;height:20px;background:#3a3a3d"></div><div class="abs" style="left:674px;top:17px;width:46px;text-align:center;font-size:11px;color:#f2f2f4;-webkit-text-stroke:0.250px #f2f2f4">Salida</div><div class="seg" style="left:1114px;top:8px;width:42px;height:30px;background:#232326;border-radius:6px"></div><svg class="icn" style="left:1126px;top:14px" width="18" height="18" viewBox="0 0 18 18"><path d="M3.300 15.600 L4.300 12.800 L12.300 4.800 L14 6.500 L6 14.500 Z M13 4.100 L13.700 3.400 a0.800 0.800 0 0 1 1.100 0 L15.400 4 a0.800 0.800 0 0 1 0 1.100 L14.700 5.800 Z" fill="#fff"/></svg><div class="small" style="left:1173px;top:8px;font-size:11px;color:#8e8e93;letter-spacing:0.150px;margin-top:0.600px">Automatización</div><div class="abs" style="left:1172.300px;top:24.300px;font-size:12.600px;color:#4fc25e;-webkit-text-stroke:0.350px #4fc25e;white-space:nowrap">Read</div><svg class="icn" style="left:1205px;top:25px" width="8" height="12" viewBox="0 0 8 12"><g fill="none" stroke="#6d6d72" stroke-width="1.200" stroke-linecap="round" stroke-linejoin="round"><path d="M1.500 4.500 L4 2 L6.500 4.500"/><path d="M1.500 7.500 L4 10 L6.500 7.500"/></g></svg><svg class="icn" style="left:1262.500px;top:20.200px" width="18" height="6" viewBox="0 0 18 6"><circle cx="3" cy="3" r="1.400" fill="#fff"/><circle cx="9" cy="3" r="1.400" fill="#fff"/><circle cx="15" cy="3" r="1.400" fill="#fff"/></svg></div>
<svg class="icn" style="left:58px;top:120px" width="16" height="16" viewBox="0 0 16 16"><path d="M8 1.500 v13 M1.500 8 h13" stroke="#e8e8ea" stroke-width="1.300" stroke-linecap="round"/></svg><div class="small" style="left:16px;width:100px;text-align:center;top:145px;letter-spacing:0.350px">Efectos MIDI</div><div class="abs" style="left:127px;top:81px;width:2px;height:95px;background:#2c2c2f;border-radius:1px"></div><div class="abs" style="left:314px;top:81px;width:2px;height:95px;background:#2c2c2f;border-radius:1px"></div><div class="pcard" style="left:134px;top:57px;width:175px;height:144px;background:#222225;border:1.500px solid #e6e6e8;border-radius:9px"><div class="pw" style="left:3.500px;top:4px"><svg class="db" style="left:-1px;top:-1px" width="37" height="37"><rect x="0.550" y="0.550" width="35.90" height="35.90" rx="6" fill="none" stroke="#2a6dd6" stroke-width="1.1" stroke-dasharray="1.9 1.9"/></svg><svg class="ps" width="22" height="22" viewBox="0 0 22 22"><circle cx="11" cy="11" r="10" fill="#f0892b"/><g fill="none" stroke="#3a1c00" stroke-width="1.700" stroke-linecap="round"><path d="M11 5.800 v5"/><path d="M8 7.600 A4.600 4.600 0 1 0 14 7.600"/></g></svg></div><div class="ptitle" style="left:43.500px;top:14.700px">Retro Synth</div><div class="pbox" style="left:20px;top:49.500px;width:62.500px;height:75px;border:1px solid #2f6fd6;padding-top:6px;letter-spacing:0.200px">Cutoff<div class="abs" style="left:0;top:30.500px;border-left:7px solid #3f86f0;border-top:6.500px solid transparent;border-bottom:6.500px solid transparent"></div><svg width="62" height="75" viewBox="1 0.900 62 75"><path d="M18.91 63.70 A19.8 19.8 0 1 1 43.29 63.70" fill="none" stroke="#161618" stroke-width="3.600" stroke-linecap="round"/><path d="M18.91 63.70 A19.8 19.8 0 0 1 11.97 53.22" fill="none" stroke="#f0892b" stroke-width="2.200" stroke-linecap="round"/><circle cx="31.1" cy="49.1" r="15.8" fill="#141416" opacity="0.6"/><circle cx="31.1" cy="48.1" r="15" fill="url(#kgrad)"/><path d="M17.12 50.57 L23.71 49.40" stroke="#fff" stroke-width="1.200" stroke-linecap="round"/></svg></div><div class="pbox" style="left:89.500px;top:49.500px;width:62.500px;height:75px;border:1px solid #2f6fd6;padding-top:6px;letter-spacing:0.200px">Resonance<div class="abs" style="left:0;top:30.500px;border-left:7px solid #3f86f0;border-top:6.500px solid transparent;border-bottom:6.500px solid transparent"></div><svg width="62" height="75" viewBox="1 0.900 62 75"><path d="M18.91 63.70 A19.8 19.8 0 1 1 43.29 63.70" fill="none" stroke="#161618" stroke-width="3.600" stroke-linecap="round"/><path d="M18.91 63.70 A19.8 19.8 0 0 1 13.46 57.09" fill="none" stroke="#f0892b" stroke-width="2.200" stroke-linecap="round"/><circle cx="31.1" cy="49.1" r="15.8" fill="#141416" opacity="0.6"/><circle cx="31.1" cy="48.1" r="15" fill="url(#kgrad)"/><path d="M17.84 53.19 L24.10 50.79" stroke="#fff" stroke-width="1.200" stroke-linecap="round"/></svg></div></div>
<div class="pcard" style="left:323px;top:59.5px;width:334px;height:138px;background:#192332"><div class="pw" style="left:3px;top:2px"><svg class="db" style="left:-1px;top:-1px" width="37" height="37"><rect x="0.550" y="0.550" width="35.90" height="35.90" rx="6" fill="none" stroke="#2a6dd6" stroke-width="1.1" stroke-dasharray="1.9 1.9"/></svg><svg class="ps" width="22" height="22" viewBox="0 0 22 22"><circle cx="11" cy="11" r="10" fill="#5ac4f5"/><g fill="none" stroke="#0b2a3d" stroke-width="1.700" stroke-linecap="round"><path d="M11 5.800 v5"/><path d="M8 7.600 A4.600 4.600 0 1 0 14 7.600"/></g></svg></div><div class="ptitle" style="left:42px">Echo</div><div class="pbox" style="left:19px;width:86px"><svg class="db" style="left:-1px;top:-1px" width="86.0" height="75"><rect x="0.550" y="0.550" width="84.90" height="73.90" rx="6" fill="none" stroke="#2a6dd6" stroke-width="1.1" stroke-dasharray="1.9 1.9"/></svg>Time<div class="abs" style="left:27.500px;top:37.500px;font-size:12.500px;color:#62b6ea;letter-spacing:0">1/4</div><svg style="left:49.500px;top:38.500px" width="8" height="12" viewBox="0 0 8 12"><g fill="none" stroke="#7d8794" stroke-width="1.200" stroke-linecap="round" stroke-linejoin="round"><path d="M1.500 4.500 L4 2 L6.500 4.500"/><path d="M1.500 7.500 L4 10 L6.500 7.500"/></g></svg></div><div class="pbox" style="left:113px;width:62px"><svg class="db" style="left:-1px;top:-1px" width="62.0" height="75"><rect x="0.550" y="0.550" width="60.90" height="73.90" rx="6" fill="none" stroke="#2a6dd6" stroke-width="1.1" stroke-dasharray="1.9 1.9"/></svg>Feedback<svg width="62" height="75" viewBox="0.700 0.700 62 75"><path d="M18.60 62.81 A19.6 19.6 0 1 1 43.80 62.81" fill="none" stroke="#232e3d" stroke-width="3" stroke-linecap="round"/><path d="M18.60 62.81 A19.6 19.6 0 0 1 41.59 31.18" fill="none" stroke="#5ac4f5" stroke-width="2.6" stroke-linecap="round"/><circle cx="31.2" cy="49.3" r="15.2" fill="#000" opacity="0.28"/><circle cx="31.2" cy="47.8" r="14.7" fill="url(#egrad)"/><path d="M40.23 37.77 L36.02 42.45" stroke="#5ac4f5" stroke-width="1.300" stroke-linecap="round"/></svg></div><div class="pbox" style="left:183px;width:62px"><svg class="db" style="left:-1px;top:-1px" width="62.0" height="75"><rect x="0.550" y="0.550" width="60.90" height="73.90" rx="6" fill="none" stroke="#2a6dd6" stroke-width="1.1" stroke-dasharray="1.9 1.9"/></svg>Dry<svg width="62" height="75" viewBox="0.700 0.700 62 75"><path d="M18.60 62.81 A19.6 19.6 0 1 1 43.80 62.81" fill="none" stroke="#232e3d" stroke-width="3" stroke-linecap="round"/><path d="M18.60 62.81 A19.6 19.6 0 0 1 16.19 60.40" fill="none" stroke="#5ac4f5" stroke-width="2.6" stroke-linecap="round"/><circle cx="31.2" cy="49.3" r="15.2" fill="#000" opacity="0.28"/><circle cx="31.2" cy="47.8" r="14.7" fill="url(#egrad)"/><path d="M20.14 55.54 L25.30 51.93" stroke="#5ac4f5" stroke-width="1.300" stroke-linecap="round"/></svg></div><div class="pbox" style="left:252.3px;width:62px"><svg class="db" style="left:-1px;top:-1px" width="62.0" height="75"><rect x="0.550" y="0.550" width="60.90" height="73.90" rx="6" fill="none" stroke="#2a6dd6" stroke-width="1.1" stroke-dasharray="1.9 1.9"/></svg>Wet<svg width="62" height="75" viewBox="0.700 0.700 62 75"><path d="M18.60 62.81 A19.6 19.6 0 1 1 43.80 62.81" fill="none" stroke="#232e3d" stroke-width="3" stroke-linecap="round"/><path d="M18.60 62.81 A19.6 19.6 0 0 1 18.09 33.23" fill="none" stroke="#5ac4f5" stroke-width="2.6" stroke-linecap="round"/><circle cx="31.2" cy="49.3" r="15.2" fill="#000" opacity="0.28"/><circle cx="31.2" cy="47.8" r="14.7" fill="url(#egrad)"/><path d="M20.86 39.12 L25.68 43.17" stroke="#5ac4f5" stroke-width="1.300" stroke-linecap="round"/></svg></div></div>
<div class="pcard" style="left:664px;top:59.5px;width:193px;height:138px;background:#72352f"><div class="pw" style="left:3px;top:2px"><svg class="db" style="left:-1px;top:-1px" width="37" height="37"><rect x="0.550" y="0.550" width="35.90" height="35.90" rx="6" fill="none" stroke="#6a98dc" stroke-width="1.1" stroke-dasharray="1.9 1.9"/></svg><svg class="ps" width="22" height="22" viewBox="0 0 22 22"><circle cx="11" cy="11" r="10" fill="#f3a732"/><g fill="none" stroke="#4a2a00" stroke-width="1.700" stroke-linecap="round"><path d="M11 5.800 v5"/><path d="M8 7.600 A4.600 4.600 0 1 0 14 7.600"/></g></svg></div><div class="ptitle" style="left:42px">Phat FX</div><div class="abs" style="left:8px;top:44px;width:85px;height:86px;border-radius:6px;background:#4d2320"></div><div class="abs" style="left:19.500px;top:50.500px;width:26px;height:26px;border-radius:13px;background:linear-gradient(180deg,#9a8480,#7a5f5b);box-shadow:0 1.500px 2px rgba(0,0,0,0.35)"></div><div class="small" style="left:-17px;top:82.500px;width:64px;text-align:center;transform:rotate(-90deg);color:#b08a84;font-size:10.800px;letter-spacing:0.200px">BP High Cut</div><div class="small" style="left:22px;top:116.700px;color:#b08a84;font-size:10.500px;letter-spacing:0.200px">BP Low Cut</div><div class="pbox" style="left:111.800px;top:48px;width:63px;height:75px;color:#d9b8b2"><svg class="db" style="left:-1px;top:-1px" width="63.0" height="75"><rect x="0.550" y="0.550" width="61.90" height="73.90" rx="6" fill="none" stroke="#6a98dc" stroke-width="1.1" stroke-dasharray="1.9 1.9"/></svg>Mix<svg width="63" height="75" viewBox="1 -0.500 63 75"><path d="M17.97 61.97 A19.8 19.8 0 1 1 43.43 61.97" fill="none" stroke="#f3a732" stroke-width="2.400" stroke-linecap="round"/><circle cx="30.7" cy="48.3" r="14.9" fill="#000" opacity="0.25"/><circle cx="30.7" cy="46.8" r="14.4" fill="url(#pgrad)"/><path d="M36.90 58.45 L33.94 52.89" stroke="#f3a732" stroke-width="1.300" stroke-linecap="round"/></svg></div></div>
<div class="pcard" style="left:865.5px;top:59.5px;width:207.500px;height:138px;background:#0c2139"><div class="pw" style="left:3px;top:2px"><svg class="db" style="left:-1px;top:-1px" width="37" height="37"><rect x="0.550" y="0.550" width="35.90" height="35.90" rx="6" fill="none" stroke="#2a6dd6" stroke-width="1.1" stroke-dasharray="1.9 1.9"/></svg><svg class="ps" width="22" height="22" viewBox="0 0 22 22"><circle cx="11" cy="11" r="10" fill="#4aa8f0"/><g fill="none" stroke="#062440" stroke-width="1.700" stroke-linecap="round"><path d="M11 5.800 v5"/><path d="M8 7.600 A4.600 4.600 0 1 0 14 7.600"/></g></svg></div><div class="ptitle" style="left:42px;letter-spacing:-0.150px">Channel EQ</div><svg class="icn" style="left:10px;top:60px" width="190" height="30" viewBox="0 0 190 30"><path d="M5.0 26.07 L7.0 25.93 L9.0 25.77 L11.0 25.58 L13.0 25.36 L15.0 25.12 L17.0 24.84 L19.0 24.52 L21.0 24.17 L23.0 23.77 L25.0 23.33 L27.0 22.84 L29.0 22.30 L31.0 21.72 L33.0 21.09 L35.0 20.41 L37.0 19.69 L39.0 18.93 L41.0 18.13 L43.0 17.30 L45.0 16.45 L47.0 15.58 L49.0 14.71 L51.0 13.85 L53.0 13.01 L55.0 12.19 L57.0 11.42 L59.0 10.72 L61.0 10.08 L63.0 9.54 L65.0 9.10 L67.0 8.77 L69.0 8.57 L71.0 8.50 L73.0 8.56 L75.0 8.75 L77.0 9.06 L79.0 9.49 L81.0 10.02 L83.0 10.65 L85.0 11.35 L87.0 12.11 L89.0 12.92 L91.0 13.76 L93.0 14.63 L95.0 15.50 L97.0 16.36 L99.0 17.22 L101.0 18.05 L103.0 18.85 L105.0 19.61 L107.0 20.34 L109.0 21.02 L111.0 21.66 L113.0 22.25 L115.0 22.79 L117.0 23.28 L119.0 23.73 L121.0 24.13 L123.0 24.49 L125.0 24.81 L127.0 25.09 L129.0 25.34 L131.0 25.56 L133.0 25.75 L135.0 25.91 L137.0 26.06 L139.0 26.18 L141.0 26.29 L143.0 26.38 L145.0 26.46 L147.0 26.52 L149.0 26.58 L151.0 26.63 L153.0 26.68 L155.0 26.72 L157.0 26.75 L159.0 26.78 L161.0 26.81 L163.0 26.83 L165.0 26.85 L167.0 26.87 L169.0 26.89 L171.0 26.91 L173.0 26.92 L175.0 26.94 L177.0 26.95 L179.0 26.96 L181.0 26.97 L183.0 26.98 L183.0 28.1 L5.0 28.1 Z" fill="#1d4268"/><path d="M5.0 28.4 H183.0" stroke="#2d5d8e" stroke-width="0.800"/><path d="M5.0 26.07 L7.0 25.93 L9.0 25.77 L11.0 25.58 L13.0 25.36 L15.0 25.12 L17.0 24.84 L19.0 24.52 L21.0 24.17 L23.0 23.77 L25.0 23.33 L27.0 22.84 L29.0 22.30 L31.0 21.72 L33.0 21.09 L35.0 20.41 L37.0 19.69 L39.0 18.93 L41.0 18.13 L43.0 17.30 L45.0 16.45 L47.0 15.58 L49.0 14.71 L51.0 13.85 L53.0 13.01 L55.0 12.19 L57.0 11.42 L59.0 10.72 L61.0 10.08 L63.0 9.54 L65.0 9.10 L67.0 8.77 L69.0 8.57 L71.0 8.50 L73.0 8.56 L75.0 8.75 L77.0 9.06 L79.0 9.49 L81.0 10.02 L83.0 10.65 L85.0 11.35 L87.0 12.11 L89.0 12.92 L91.0 13.76 L93.0 14.63 L95.0 15.50 L97.0 16.36 L99.0 17.22 L101.0 18.05 L103.0 18.85 L105.0 19.61 L107.0 20.34 L109.0 21.02 L111.0 21.66 L113.0 22.25 L115.0 22.79 L117.0 23.28 L119.0 23.73 L121.0 24.13 L123.0 24.49 L125.0 24.81 L127.0 25.09 L129.0 25.34 L131.0 25.56 L133.0 25.75 L135.0 25.91 L137.0 26.06 L139.0 26.18 L141.0 26.29 L143.0 26.38 L145.0 26.46 L147.0 26.52 L149.0 26.58 L151.0 26.63 L153.0 26.68 L155.0 26.72 L157.0 26.75 L159.0 26.78 L161.0 26.81 L163.0 26.83 L165.0 26.85 L167.0 26.87 L169.0 26.89 L171.0 26.91 L173.0 26.92 L175.0 26.94 L177.0 26.95 L179.0 26.96 L181.0 26.97 L183.0 26.98" fill="none" stroke="#8fc7fa" stroke-width="1.600" stroke-linecap="round" stroke-linejoin="round"/></svg><div class="small" style="left:9px;top:92px;color:#6f8cad;font-size:10.500px;letter-spacing:0.2px">20</div><div class="small" style="left:47px;top:92px;color:#6f8cad;font-size:10.500px;letter-spacing:0.2px">100</div><div class="small" style="left:87px;top:92px;color:#6f8cad;font-size:10.500px;letter-spacing:0.2px">500</div><div class="small" style="left:127px;top:92px;color:#6f8cad;font-size:10.500px;letter-spacing:0.2px">2k</div><div class="small" style="left:165px;top:92px;color:#6f8cad;font-size:10.500px;letter-spacing:0.2px">10k</div></div>
<svg class="icn" style="left:1108px;top:120px" width="16" height="16" viewBox="0 0 16 16"><path d="M8 1.500 v13 M1.500 8 h13" stroke="#e8e8ea" stroke-width="1.300" stroke-linecap="round"/></svg><div class="small" style="left:1066px;width:100px;text-align:center;top:146px;letter-spacing:0.350px">Efec. audio</div></div>
<div id="dlg">
<div class="abs" style="left:0;top:0;width:324px;height:120px;background:radial-gradient(ellipse 150px 55px at 235px -8px,rgba(72,62,190,0.380),rgba(72,62,190,0) 100%),linear-gradient(90deg,rgba(0,0,0,0.280),rgba(0,0,0,0) 38%);-webkit-mask-image:linear-gradient(180deg,#000 60%,transparent);mask-image:linear-gradient(180deg,#000 60%,transparent)"></div>
<svg class="icn" style="left:19px;top:70px;display:none"></svg>
<svg class="icn" style="left:19.500px;top:14.500px" width="20" height="20" viewBox="0 0 20 20"><g fill="none" stroke="#4a93f0" stroke-width="1.500" stroke-linecap="round"><circle cx="10" cy="10" r="8.600"/><path d="M6.800 6.800 L13.200 13.200 M13.200 6.800 L6.800 13.200"/></g></svg>
<div class="abs" style="left:0;top:15px;width:324px;text-align:center;font-size:16.500px;color:#fff;letter-spacing:0.1px">Recordar MIDI</div>
<svg class="icn" style="left:284px;top:14.500px" width="20" height="20" viewBox="0 0 20 20"><circle cx="10" cy="10" r="8.600" fill="none" stroke="#4a93f0" stroke-width="1.500"/><circle cx="6" cy="10" r="1.200" fill="#4a93f0"/><circle cx="10" cy="10" r="1.200" fill="#4a93f0"/><circle cx="14" cy="10" r="1.200" fill="#4a93f0"/></svg>

<div class="it sel" style="top:51.500px"><div class="h">Pista 2 • Deluxe Classic</div>
<svg class="icn" style="left:11px;top:27px" width="14" height="30" viewBox="0 0 14 30"><path d="M7 1 v28" stroke="#e6f0ff" stroke-width="1.200"/><rect x="1" y="6.500" width="12" height="17" rx="3" fill="#e6f0ff"/><rect x="4.500" y="14" width="5" height="2" rx="1" fill="#3b8bf2"/></svg>
<div class="l">Volumen</div><div class="cc">CC 74</div><svg class="ch" width="10" height="14" viewBox="0 0 10 14"><path d="M3 2 L7.500 6.500 L3 11" fill="none" stroke="#d8e8ff" stroke-width="1.600" stroke-linecap="round" stroke-linejoin="round"/></svg></div>

<div class="it" style="top:121.500px"><div class="h">Pista 2 • Deluxe Classic<span style="display:inline-block;width:1px;height:10px;background:#5a6a5c;margin:0 7px;vertical-align:-1px"></span>Retro Synth</div>
<svg class="icn" style="left:7px;top:31px" width="23" height="23" viewBox="0 0 23 23"><circle cx="11.500" cy="11.500" r="9.600" fill="none" stroke="#e0e0e2" stroke-width="1.400"/><path d="M11.500 2.500 v8" stroke="#e0e0e2" stroke-width="1.400" stroke-linecap="round"/></svg>
<div class="l">Cutoff</div><div class="cc">CC 71</div><svg class="ch" width="10" height="14" viewBox="0 0 10 14"><path d="M3 2 L7.500 6.500 L3 11" fill="none" stroke="#7a7a80" stroke-width="1.600" stroke-linecap="round" stroke-linejoin="round"/></svg></div>

<div class="it" style="top:191.500px"><div class="h">Atajo de teclado</div><svg class="icn" style="left:9px;top:33px" width="19" height="19" viewBox="0 0 19 19"><rect x="1" y="1" width="17" height="17" rx="3" fill="none" stroke="#e8e8ea" stroke-width="1.300"/><text x="9.500" y="14.300" font-size="13.500" fill="#e8e8ea" text-anchor="middle" font-family="DejaVu Sans, sans-serif">⌘</text></svg><div class="l">Detener</div><div class="cc">CC 20</div><svg class="ch" width="10" height="14" viewBox="0 0 10 14"><path d="M3 2 L7.500 6.500 L3 11" fill="none" stroke="#7a7a80" stroke-width="1.600" stroke-linecap="round" stroke-linejoin="round"/></svg></div>
<div class="it" style="top:261.500px"><div class="h">Atajo de teclado</div><svg class="icn" style="left:9px;top:33px" width="19" height="19" viewBox="0 0 19 19"><rect x="1" y="1" width="17" height="17" rx="3" fill="none" stroke="#e8e8ea" stroke-width="1.300"/><text x="9.500" y="14.300" font-size="13.500" fill="#e8e8ea" text-anchor="middle" font-family="DejaVu Sans, sans-serif">⌘</text></svg><div class="l" style="letter-spacing:-0.180px">Activar/de...modo Ciclo</div><div class="cc">CC 24</div><svg class="ch" width="10" height="14" viewBox="0 0 10 14"><path d="M3 2 L7.500 6.500 L3 11" fill="none" stroke="#7a7a80" stroke-width="1.600" stroke-linecap="round" stroke-linejoin="round"/></svg></div>

<div class="abs" style="left:0;top:323.500px;width:324px;height:73px;background:linear-gradient(180deg,#262521,#222120)"></div>
<div class="abs" style="left:78px;top:338.500px;width:168px;height:34px;border-radius:9px;background:#2d2b2a;color:#e9554b;font-size:16px;text-align:center;line-height:33px;letter-spacing:0.1px">Empezar a recordar</div>
<div class="abs" style="left:147.500px;top:385.500px;width:29px;height:4px;border-radius:2px;background:#8e8e92"></div>
</div>
<div class="abs" style="left:0;top:666.600px;width:1303px;height:3.200px;background:#020203"></div>
<div class="abs" style="left:0;top:879.650px;width:1303px;height:3.400px;background:#020203"></div>
<div id="bottombar">
<svg class="icn" style="left:19px;top:9.7px" width="30" height="26" viewBox="0 0 30 26"><g fill="none" stroke="#fff" stroke-width="1.500" stroke-linejoin="round"><path d="M5 17 h-1.500 a2 2 0 0 1 -2 -2 v-8 a2 2 0 0 1 2 -2 h12 a2 2 0 0 1 2 2 v0.500"/></g><rect x="5.500" y="8" width="16" height="13.500" rx="2.500" fill="#fff"/><g fill="none" stroke="#1f1f21" stroke-width="1.300" stroke-linecap="round" stroke-linejoin="round"><path d="M12 18 v-6.500 l5 -1 v6.500"/></g><circle cx="10.800" cy="18" r="1.600" fill="#1f1f21"/><circle cx="15.800" cy="17" r="1.600" fill="#1f1f21"/><circle cx="23" cy="5.500" r="4.500" fill="#f0424b"/></svg><svg class="icn" style="left:66px;top:14.7px" width="16.500" height="17" viewBox="0 0 18 18" preserveAspectRatio="none"><g fill="none" stroke="#fff" stroke-width="1.500"><rect x="1" y="1.500" width="16" height="6.500" rx="3.250"/></g><circle cx="5" cy="4.750" r="2" fill="#fff"/><rect x="1" y="10" width="16" height="6.500" rx="3.250" fill="#fff"/><circle cx="13" cy="13.250" r="2" fill="#1f1f21"/></svg><svg class="icn" style="left:110px;top:13.7px" width="15.500" height="19" viewBox="0 0 16 20"><g fill="none" stroke="#fff" stroke-width="1.400" stroke-linecap="round"><rect x="1.500" y="1.500" width="13" height="17" rx="2"/><path d="M8 4.500 v3.500 M8 12 v3.500"/><circle cx="8" cy="10" r="1.700"/></g></svg><svg class="icn" style="left:598.800px;top:14.6px" width="18" height="18" viewBox="0 0 18 18"><path d="M3.300 15.600 L4.300 12.800 L12.300 4.800 L14 6.500 L6 14.500 Z M13 4.100 L13.700 3.400 a0.800 0.800 0 0 1 1.100 0 L15.400 4 a0.800 0.800 0 0 1 0 1.100 L14.700 5.800 Z" fill="#fff"/></svg><div class="abs" style="left:631px;top:8.100px;width:42.200px;height:30.700px;border-radius:6.500px;background:#aaaaae"></div><svg class="icn" style="left:639.600px;top:12.800px" width="24" height="24" viewBox="0 0 24 24"><g fill="none" stroke="#1a1a1c" stroke-width="1.500" stroke-linecap="round"><circle cx="12" cy="12.100" r="5"/><path d="M12 7.500 v4.600"/></g><g fill="#1a1a1c"><circle cx="12" cy="3.300" r="0.900"/><circle cx="5.300" cy="6.300" r="0.900"/><circle cx="18.700" cy="6.300" r="0.900"/><circle cx="3.300" cy="12.500" r="0.900"/><circle cx="20.700" cy="12.500" r="0.900"/><circle cx="5.300" cy="18.200" r="0.900"/><circle cx="18.700" cy="18.200" r="0.900"/></g></svg><svg class="icn" style="left:685px;top:14px" width="20" height="20" viewBox="0 0 20 20"><g fill="none" stroke="#fff" stroke-width="1.300" stroke-linecap="round"><path d="M4.400 2.500 v5.700 M4.400 13.200 v2.800 M10.400 2.500 v1.200 M10.400 8.700 v7.300 M16.400 2.500 v5.200 M16.400 12.700 v3.300"/><ellipse cx="4.400" cy="10.700" rx="1.700" ry="2.600"/><ellipse cx="10.400" cy="6.200" rx="1.700" ry="2.600"/><ellipse cx="16.400" cy="10.200" rx="1.700" ry="2.600"/></g></svg><svg class="icn" style="left:1261px;top:16.1px" width="22" height="18" viewBox="0 0 22 18"><rect x="1" y="2" width="20" height="14" rx="2.500" fill="#fff"/><g fill="#1f1f21"><rect x="5" y="2" width="2.600" height="8.500"/><rect x="9.700" y="2" width="2.600" height="8.500"/><rect x="14.400" y="2" width="2.600" height="8.500"/><rect x="5.900" y="10" width="0.900" height="6"/><rect x="10.600" y="10" width="0.900" height="6"/><rect x="15.300" y="10" width="0.900" height="6"/></g></svg><svg class="icn" style="left:1280px;top:51.100px" width="22" height="20" viewBox="0 0 22 20"><path d="M17.900 3.200 A12.200 11.800 0 0 1 5.800 15" fill="none" stroke="#fff" stroke-width="3" stroke-linecap="round"/></svg></div>
</div>
<div class="vline" style="left:1134.500px;top:16px;height:56px"></div>
<div class="vline" style="left:844.900px;top:244.200px;height:402.500px;width:2.200px"></div>
<div class="hline" style="left:835px;top:244.200px;width:12px;height:2.200px"></div>
<div class="hline" style="left:835px;top:644.600px;width:12px;height:2.200px"></div>
<div class="hline" style="left:847px;top:444.500px;width:13.800px;height:2.300px"></div>
<div class="vline" style="left:858.500px;top:444.500px;height:610.500px;width:2.300px"></div>

</body></html>
